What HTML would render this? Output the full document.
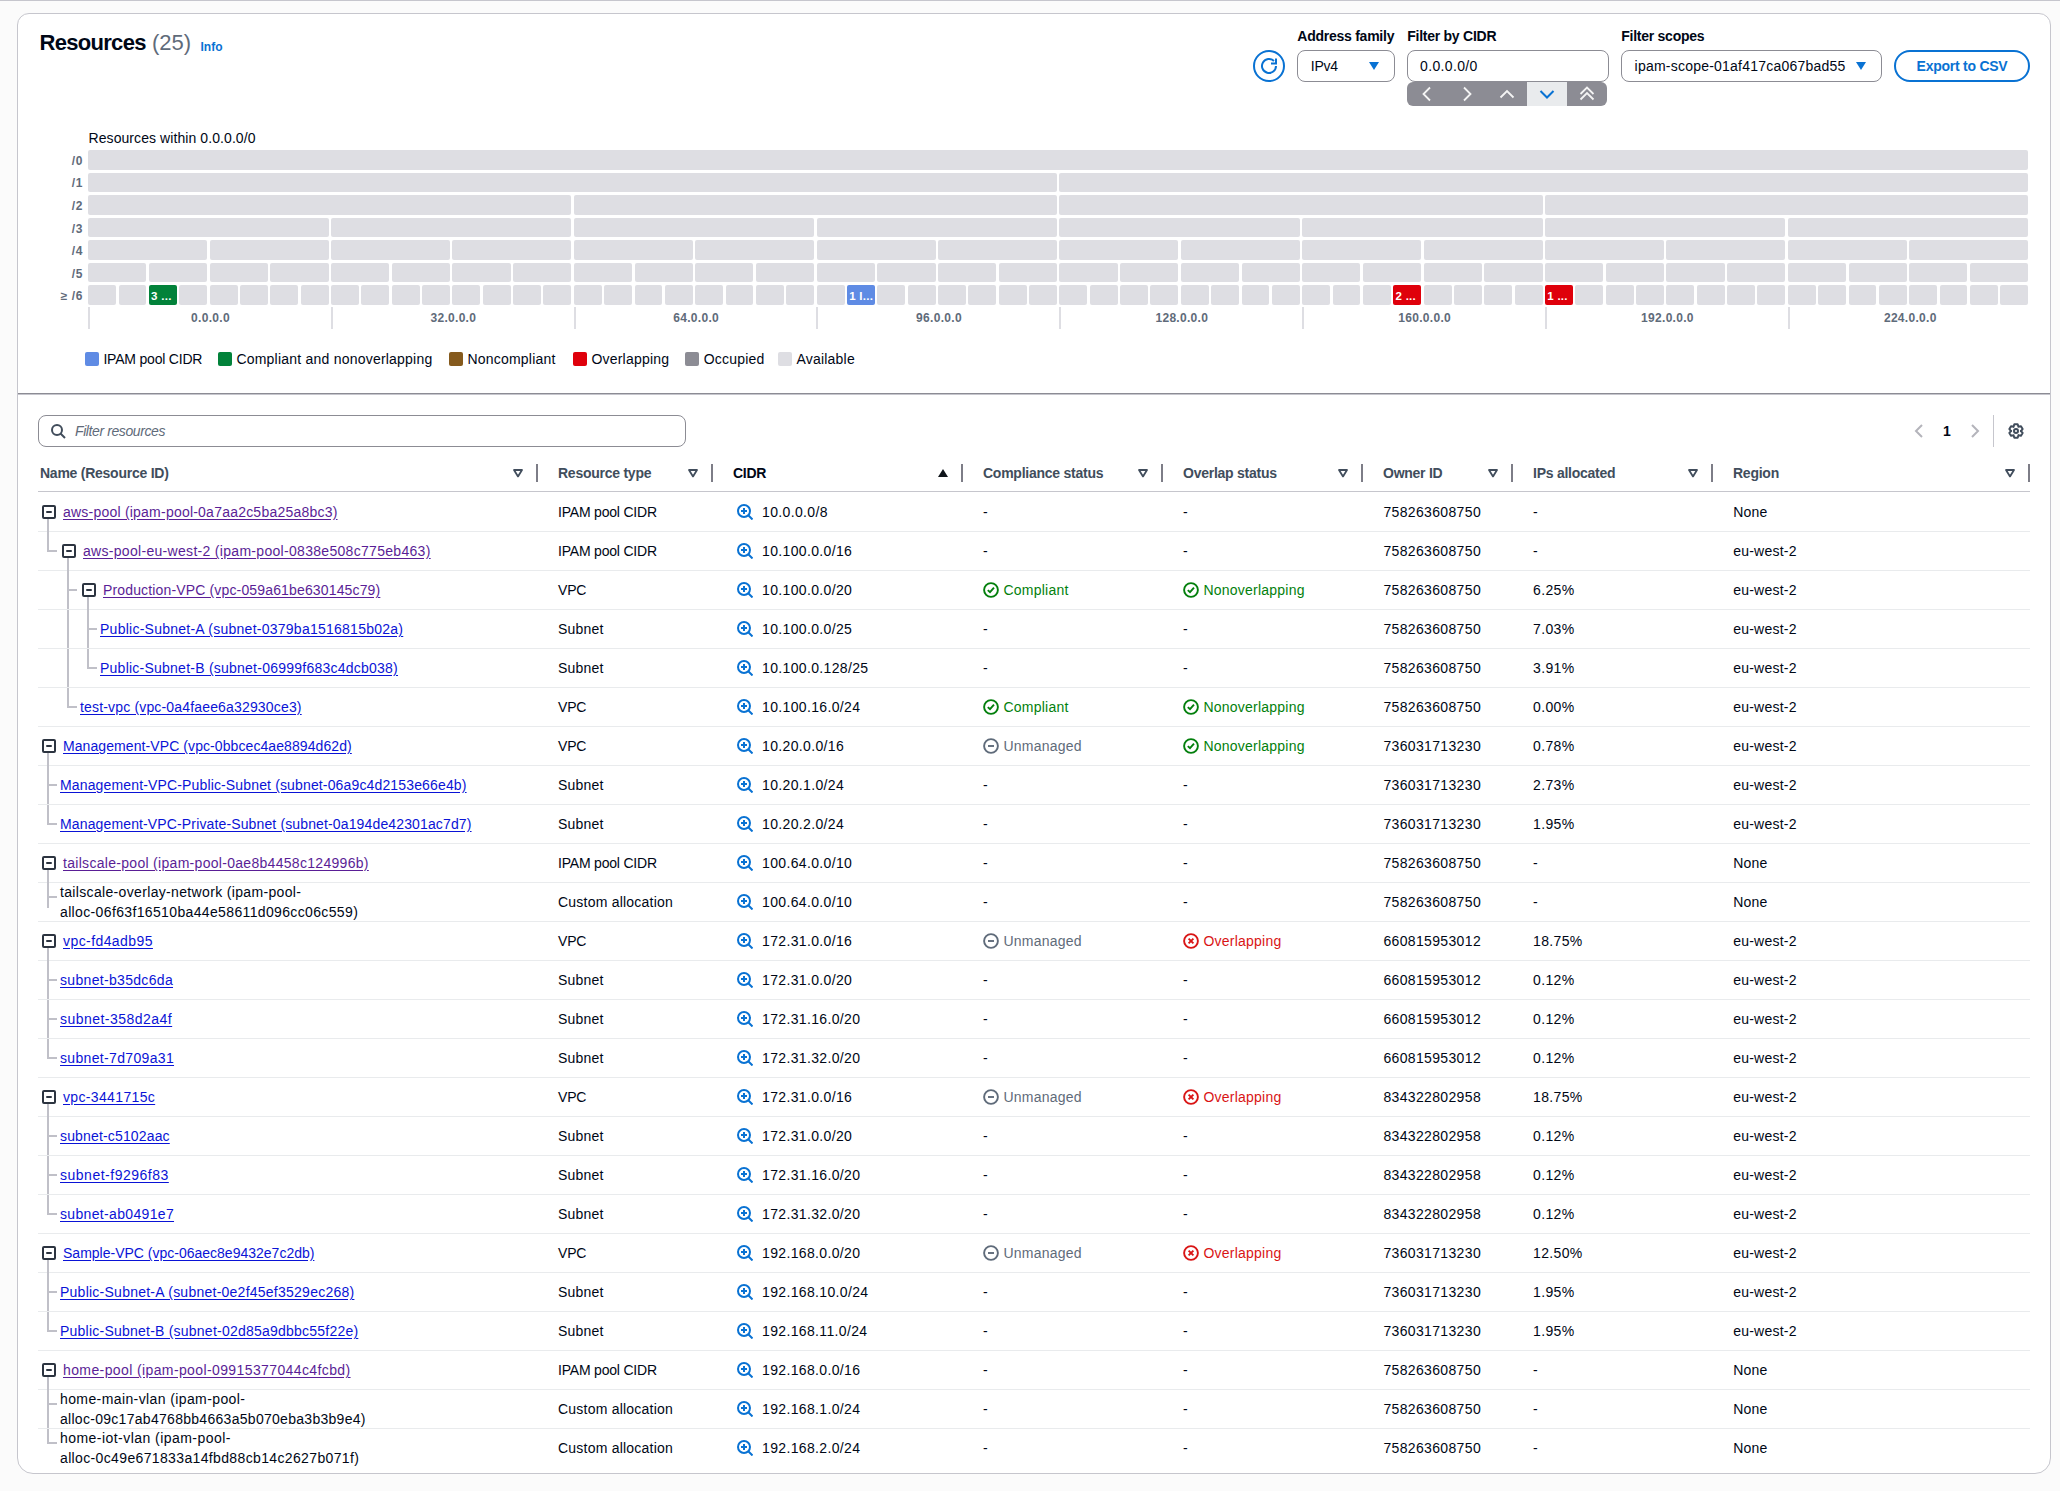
<!DOCTYPE html>
<html><head><meta charset="utf-8"><title>Resources</title>
<style>
html,body{margin:0;padding:0;}
body{width:2060px;height:1491px;overflow:hidden;position:relative;background:#fbfbfb;font-family:"Liberation Sans", sans-serif;}
.a{position:absolute;}
.t{position:absolute;white-space:nowrap;}
.cell{border-radius:2px;color:#fff;font-weight:700;font-size:11.5px;letter-spacing:0.3px;line-height:19.6px;overflow:hidden;white-space:nowrap;}
.cell span{position:absolute;left:2.2px;top:2px;}
</style></head><body>
<div class="a" style="left:0.00px;top:0.00px;width:2060.00px;height:1.00px;background:#c6c6cd"></div>
<div class="a" style="left:17.00px;top:13.00px;width:2034.00px;height:1461.00px;border:1px solid #c6c6cd;border-radius:12px 12px 16px 16px;background:#fff;box-sizing:border-box"></div>
<div class="t" style="left:39.50px;top:32.28px;font-size:22px;line-height:22px;font-weight:700;color:#000716;letter-spacing:-0.7px">Resources</div>
<div class="t" style="left:152.00px;top:32.28px;font-size:22px;line-height:22px;font-weight:400;color:#5f6b7a;">(25)</div>
<div class="t" style="left:200.50px;top:40.74px;font-size:12px;line-height:12px;font-weight:700;color:#0972d3;">Info</div>
<svg class="a" style="left:1252.00px;top:49.00px" width="34" height="34" viewBox="0 0 34 34" fill="none"><circle cx="17" cy="17" r="15" stroke="#0972d3" stroke-width="2"/><path d="M24 17a7 7 0 1 1-2.05-4.95" stroke="#0972d3" stroke-width="2"/><path d="M19 14.5h5v-5" stroke="#0972d3" stroke-width="2"/></svg>
<div class="t" style="left:1297.30px;top:29.05px;font-size:14px;line-height:14px;font-weight:700;color:#000716;;letter-spacing:-0.25px">Address family</div>
<div class="t" style="left:1407.20px;top:29.05px;font-size:14px;line-height:14px;font-weight:700;color:#000716;;letter-spacing:-0.25px">Filter by CIDR</div>
<div class="t" style="left:1621.20px;top:29.05px;font-size:14px;line-height:14px;font-weight:700;color:#000716;;letter-spacing:-0.25px">Filter scopes</div>
<div class="a" style="left:1297.00px;top:50.00px;width:98.00px;height:32.00px;border:1px solid #8c8c94;border-radius:8px;box-sizing:border-box;background:#fff"></div>
<div class="t" style="left:1310.70px;top:58.95px;font-size:14px;line-height:14px;font-weight:400;color:#000716;;letter-spacing:-0.2px">IPv4</div>
<svg class="a" style="left:1366.00px;top:58.00px" width="16" height="16" viewBox="0 0 16 16" fill="none"><path d="M3 4h10l-5 8z" fill="#0972d3"/></svg>
<div class="a" style="left:1407.00px;top:82.00px;width:200.00px;height:24.00px;background:#8c8c94;border-radius:6px"></div>
<div class="a" style="left:1527.00px;top:82.00px;width:40.00px;height:24.00px;background:#e9ebed"></div>
<div class="a" style="left:1407.00px;top:50.00px;width:202.00px;height:32.00px;border:1px solid #8c8c94;border-radius:8px;box-sizing:border-box;background:#fff"></div>
<div class="t" style="left:1420.10px;top:58.95px;font-size:14px;line-height:14px;font-weight:400;color:#000716;;letter-spacing:0.35px">0.0.0.0/0</div>
<svg class="a" style="left:1419.00px;top:86.00px" width="16" height="16" viewBox="0 0 16 16" fill="none"><path d="M11 1.5 4.5 8l6.5 6.5" stroke="#f4f4f4" stroke-width="1.8"/></svg>
<svg class="a" style="left:1459.00px;top:86.00px" width="16" height="16" viewBox="0 0 16 16" fill="none"><path d="M5 1.5 11.5 8 5 14.5" stroke="#f4f4f4" stroke-width="1.8"/></svg>
<svg class="a" style="left:1499.00px;top:86.00px" width="16" height="16" viewBox="0 0 16 16" fill="none"><path d="M1.5 11.5 8 5l6.5 6.5" stroke="#f4f4f4" stroke-width="1.8"/></svg>
<svg class="a" style="left:1539.00px;top:86.00px" width="16" height="16" viewBox="0 0 16 16" fill="none"><path d="M1.5 5 8 11.5 14.5 5" stroke="#0972d3" stroke-width="2"/></svg>
<svg class="a" style="left:1579.00px;top:86.00px" width="16" height="16" viewBox="0 0 16 16" fill="none"><path d="M1.5 8 8 1.5 14.5 8M1.5 13.5 8 7l6.5 6.5" stroke="#f4f4f4" stroke-width="1.8"/></svg>
<div class="a" style="left:1621.00px;top:50.00px;width:261.00px;height:32.00px;border:1px solid #8c8c94;border-radius:8px;box-sizing:border-box;background:#fff"></div>
<div class="t" style="left:1634.60px;top:58.95px;font-size:14px;line-height:14px;font-weight:400;color:#000716;;letter-spacing:0.22px">ipam-scope-01af417ca067bad55</div>
<svg class="a" style="left:1853.00px;top:58.00px" width="16" height="16" viewBox="0 0 16 16" fill="none"><path d="M3 4h10l-5 8z" fill="#0972d3"/></svg>
<div class="a" style="left:1894.00px;top:50.00px;width:136.00px;height:32.00px;border:2px solid #0972d3;border-radius:20px;box-sizing:border-box;background:#fff"></div>
<div class="t" style="left:1462.00px;width:1000px;text-align:center;top:58.95px;font-size:14px;line-height:14px;font-weight:700;color:#0972d3;;letter-spacing:-0.25px">Export to CSV</div>
<div class="t" style="left:88.50px;top:130.85px;font-size:14px;line-height:14px;font-weight:400;color:#000716;letter-spacing:0.08px">Resources within 0.0.0.0/0</div>
<div class="t" style="left:-917.00px;width:1000px;text-align:right;top:154.94px;font-size:12px;line-height:12px;font-weight:700;color:#5f6b7a;letter-spacing:0.6px">/0</div>
<div class="a" style="left:88.20px;top:150.10px;width:1940.00px;height:19.60px;background:#dedee3;border-radius:2px"></div>
<div class="t" style="left:-917.00px;width:1000px;text-align:right;top:177.46px;font-size:12px;line-height:12px;font-weight:700;color:#5f6b7a;letter-spacing:0.6px">/1</div>
<div class="a" style="left:88.20px;top:172.62px;width:968.80px;height:19.60px;background:#dedee3;border-radius:2px"></div>
<div class="a" style="left:1059.40px;top:172.62px;width:968.80px;height:19.60px;background:#dedee3;border-radius:2px"></div>
<div class="t" style="left:-917.00px;width:1000px;text-align:right;top:199.98px;font-size:12px;line-height:12px;font-weight:700;color:#5f6b7a;letter-spacing:0.6px">/2</div>
<div class="a" style="left:88.20px;top:195.14px;width:483.20px;height:19.60px;background:#dedee3;border-radius:2px"></div>
<div class="a" style="left:573.80px;top:195.14px;width:483.20px;height:19.60px;background:#dedee3;border-radius:2px"></div>
<div class="a" style="left:1059.40px;top:195.14px;width:483.20px;height:19.60px;background:#dedee3;border-radius:2px"></div>
<div class="a" style="left:1545.00px;top:195.14px;width:483.20px;height:19.60px;background:#dedee3;border-radius:2px"></div>
<div class="t" style="left:-917.00px;width:1000px;text-align:right;top:222.50px;font-size:12px;line-height:12px;font-weight:700;color:#5f6b7a;letter-spacing:0.6px">/3</div>
<div class="a" style="left:88.20px;top:217.66px;width:240.40px;height:19.60px;background:#dedee3;border-radius:2px"></div>
<div class="a" style="left:331.00px;top:217.66px;width:240.40px;height:19.60px;background:#dedee3;border-radius:2px"></div>
<div class="a" style="left:573.80px;top:217.66px;width:240.40px;height:19.60px;background:#dedee3;border-radius:2px"></div>
<div class="a" style="left:816.60px;top:217.66px;width:240.40px;height:19.60px;background:#dedee3;border-radius:2px"></div>
<div class="a" style="left:1059.40px;top:217.66px;width:240.40px;height:19.60px;background:#dedee3;border-radius:2px"></div>
<div class="a" style="left:1302.20px;top:217.66px;width:240.40px;height:19.60px;background:#dedee3;border-radius:2px"></div>
<div class="a" style="left:1545.00px;top:217.66px;width:240.40px;height:19.60px;background:#dedee3;border-radius:2px"></div>
<div class="a" style="left:1787.80px;top:217.66px;width:240.40px;height:19.60px;background:#dedee3;border-radius:2px"></div>
<div class="t" style="left:-917.00px;width:1000px;text-align:right;top:245.02px;font-size:12px;line-height:12px;font-weight:700;color:#5f6b7a;letter-spacing:0.6px">/4</div>
<div class="a" style="left:88.20px;top:240.18px;width:119.00px;height:19.60px;background:#dedee3;border-radius:2px"></div>
<div class="a" style="left:209.60px;top:240.18px;width:119.00px;height:19.60px;background:#dedee3;border-radius:2px"></div>
<div class="a" style="left:331.00px;top:240.18px;width:119.00px;height:19.60px;background:#dedee3;border-radius:2px"></div>
<div class="a" style="left:452.40px;top:240.18px;width:119.00px;height:19.60px;background:#dedee3;border-radius:2px"></div>
<div class="a" style="left:573.80px;top:240.18px;width:119.00px;height:19.60px;background:#dedee3;border-radius:2px"></div>
<div class="a" style="left:695.20px;top:240.18px;width:119.00px;height:19.60px;background:#dedee3;border-radius:2px"></div>
<div class="a" style="left:816.60px;top:240.18px;width:119.00px;height:19.60px;background:#dedee3;border-radius:2px"></div>
<div class="a" style="left:938.00px;top:240.18px;width:119.00px;height:19.60px;background:#dedee3;border-radius:2px"></div>
<div class="a" style="left:1059.40px;top:240.18px;width:119.00px;height:19.60px;background:#dedee3;border-radius:2px"></div>
<div class="a" style="left:1180.80px;top:240.18px;width:119.00px;height:19.60px;background:#dedee3;border-radius:2px"></div>
<div class="a" style="left:1302.20px;top:240.18px;width:119.00px;height:19.60px;background:#dedee3;border-radius:2px"></div>
<div class="a" style="left:1423.60px;top:240.18px;width:119.00px;height:19.60px;background:#dedee3;border-radius:2px"></div>
<div class="a" style="left:1545.00px;top:240.18px;width:119.00px;height:19.60px;background:#dedee3;border-radius:2px"></div>
<div class="a" style="left:1666.40px;top:240.18px;width:119.00px;height:19.60px;background:#dedee3;border-radius:2px"></div>
<div class="a" style="left:1787.80px;top:240.18px;width:119.00px;height:19.60px;background:#dedee3;border-radius:2px"></div>
<div class="a" style="left:1909.20px;top:240.18px;width:119.00px;height:19.60px;background:#dedee3;border-radius:2px"></div>
<div class="t" style="left:-917.00px;width:1000px;text-align:right;top:267.54px;font-size:12px;line-height:12px;font-weight:700;color:#5f6b7a;letter-spacing:0.6px">/5</div>
<div class="a" style="left:88.20px;top:262.70px;width:58.30px;height:19.60px;background:#dedee3;border-radius:2px"></div>
<div class="a" style="left:148.90px;top:262.70px;width:58.30px;height:19.60px;background:#dedee3;border-radius:2px"></div>
<div class="a" style="left:209.60px;top:262.70px;width:58.30px;height:19.60px;background:#dedee3;border-radius:2px"></div>
<div class="a" style="left:270.30px;top:262.70px;width:58.30px;height:19.60px;background:#dedee3;border-radius:2px"></div>
<div class="a" style="left:331.00px;top:262.70px;width:58.30px;height:19.60px;background:#dedee3;border-radius:2px"></div>
<div class="a" style="left:391.70px;top:262.70px;width:58.30px;height:19.60px;background:#dedee3;border-radius:2px"></div>
<div class="a" style="left:452.40px;top:262.70px;width:58.30px;height:19.60px;background:#dedee3;border-radius:2px"></div>
<div class="a" style="left:513.10px;top:262.70px;width:58.30px;height:19.60px;background:#dedee3;border-radius:2px"></div>
<div class="a" style="left:573.80px;top:262.70px;width:58.30px;height:19.60px;background:#dedee3;border-radius:2px"></div>
<div class="a" style="left:634.50px;top:262.70px;width:58.30px;height:19.60px;background:#dedee3;border-radius:2px"></div>
<div class="a" style="left:695.20px;top:262.70px;width:58.30px;height:19.60px;background:#dedee3;border-radius:2px"></div>
<div class="a" style="left:755.90px;top:262.70px;width:58.30px;height:19.60px;background:#dedee3;border-radius:2px"></div>
<div class="a" style="left:816.60px;top:262.70px;width:58.30px;height:19.60px;background:#dedee3;border-radius:2px"></div>
<div class="a" style="left:877.30px;top:262.70px;width:58.30px;height:19.60px;background:#dedee3;border-radius:2px"></div>
<div class="a" style="left:938.00px;top:262.70px;width:58.30px;height:19.60px;background:#dedee3;border-radius:2px"></div>
<div class="a" style="left:998.70px;top:262.70px;width:58.30px;height:19.60px;background:#dedee3;border-radius:2px"></div>
<div class="a" style="left:1059.40px;top:262.70px;width:58.30px;height:19.60px;background:#dedee3;border-radius:2px"></div>
<div class="a" style="left:1120.10px;top:262.70px;width:58.30px;height:19.60px;background:#dedee3;border-radius:2px"></div>
<div class="a" style="left:1180.80px;top:262.70px;width:58.30px;height:19.60px;background:#dedee3;border-radius:2px"></div>
<div class="a" style="left:1241.50px;top:262.70px;width:58.30px;height:19.60px;background:#dedee3;border-radius:2px"></div>
<div class="a" style="left:1302.20px;top:262.70px;width:58.30px;height:19.60px;background:#dedee3;border-radius:2px"></div>
<div class="a" style="left:1362.90px;top:262.70px;width:58.30px;height:19.60px;background:#dedee3;border-radius:2px"></div>
<div class="a" style="left:1423.60px;top:262.70px;width:58.30px;height:19.60px;background:#dedee3;border-radius:2px"></div>
<div class="a" style="left:1484.30px;top:262.70px;width:58.30px;height:19.60px;background:#dedee3;border-radius:2px"></div>
<div class="a" style="left:1545.00px;top:262.70px;width:58.30px;height:19.60px;background:#dedee3;border-radius:2px"></div>
<div class="a" style="left:1605.70px;top:262.70px;width:58.30px;height:19.60px;background:#dedee3;border-radius:2px"></div>
<div class="a" style="left:1666.40px;top:262.70px;width:58.30px;height:19.60px;background:#dedee3;border-radius:2px"></div>
<div class="a" style="left:1727.10px;top:262.70px;width:58.30px;height:19.60px;background:#dedee3;border-radius:2px"></div>
<div class="a" style="left:1787.80px;top:262.70px;width:58.30px;height:19.60px;background:#dedee3;border-radius:2px"></div>
<div class="a" style="left:1848.50px;top:262.70px;width:58.30px;height:19.60px;background:#dedee3;border-radius:2px"></div>
<div class="a" style="left:1909.20px;top:262.70px;width:58.30px;height:19.60px;background:#dedee3;border-radius:2px"></div>
<div class="a" style="left:1969.90px;top:262.70px;width:58.30px;height:19.60px;background:#dedee3;border-radius:2px"></div>
<div class="t" style="left:-917.00px;width:1000px;text-align:right;top:290.06px;font-size:12px;line-height:12px;font-weight:700;color:#5f6b7a;letter-spacing:0.6px">&ge; /6</div>
<div class="a" style="left:88.20px;top:285.22px;width:27.95px;height:19.60px;background:#dedee3;border-radius:2px"></div>
<div class="a" style="left:118.55px;top:285.22px;width:27.95px;height:19.60px;background:#dedee3;border-radius:2px"></div>
<div class="a cell" style="left:148.90px;top:285.22px;width:27.95px;height:19.6px;background:#02823a"><span>3 ...</span></div>
<div class="a" style="left:179.25px;top:285.22px;width:27.95px;height:19.60px;background:#dedee3;border-radius:2px"></div>
<div class="a" style="left:209.60px;top:285.22px;width:27.95px;height:19.60px;background:#dedee3;border-radius:2px"></div>
<div class="a" style="left:239.95px;top:285.22px;width:27.95px;height:19.60px;background:#dedee3;border-radius:2px"></div>
<div class="a" style="left:270.30px;top:285.22px;width:27.95px;height:19.60px;background:#dedee3;border-radius:2px"></div>
<div class="a" style="left:300.65px;top:285.22px;width:27.95px;height:19.60px;background:#dedee3;border-radius:2px"></div>
<div class="a" style="left:331.00px;top:285.22px;width:27.95px;height:19.60px;background:#dedee3;border-radius:2px"></div>
<div class="a" style="left:361.35px;top:285.22px;width:27.95px;height:19.60px;background:#dedee3;border-radius:2px"></div>
<div class="a" style="left:391.70px;top:285.22px;width:27.95px;height:19.60px;background:#dedee3;border-radius:2px"></div>
<div class="a" style="left:422.05px;top:285.22px;width:27.95px;height:19.60px;background:#dedee3;border-radius:2px"></div>
<div class="a" style="left:452.40px;top:285.22px;width:27.95px;height:19.60px;background:#dedee3;border-radius:2px"></div>
<div class="a" style="left:482.75px;top:285.22px;width:27.95px;height:19.60px;background:#dedee3;border-radius:2px"></div>
<div class="a" style="left:513.10px;top:285.22px;width:27.95px;height:19.60px;background:#dedee3;border-radius:2px"></div>
<div class="a" style="left:543.45px;top:285.22px;width:27.95px;height:19.60px;background:#dedee3;border-radius:2px"></div>
<div class="a" style="left:573.80px;top:285.22px;width:27.95px;height:19.60px;background:#dedee3;border-radius:2px"></div>
<div class="a" style="left:604.15px;top:285.22px;width:27.95px;height:19.60px;background:#dedee3;border-radius:2px"></div>
<div class="a" style="left:634.50px;top:285.22px;width:27.95px;height:19.60px;background:#dedee3;border-radius:2px"></div>
<div class="a" style="left:664.85px;top:285.22px;width:27.95px;height:19.60px;background:#dedee3;border-radius:2px"></div>
<div class="a" style="left:695.20px;top:285.22px;width:27.95px;height:19.60px;background:#dedee3;border-radius:2px"></div>
<div class="a" style="left:725.55px;top:285.22px;width:27.95px;height:19.60px;background:#dedee3;border-radius:2px"></div>
<div class="a" style="left:755.90px;top:285.22px;width:27.95px;height:19.60px;background:#dedee3;border-radius:2px"></div>
<div class="a" style="left:786.25px;top:285.22px;width:27.95px;height:19.60px;background:#dedee3;border-radius:2px"></div>
<div class="a" style="left:816.60px;top:285.22px;width:27.95px;height:19.60px;background:#dedee3;border-radius:2px"></div>
<div class="a cell" style="left:846.95px;top:285.22px;width:27.95px;height:19.6px;background:#5f8be4"><span>1 I...</span></div>
<div class="a" style="left:877.30px;top:285.22px;width:27.95px;height:19.60px;background:#dedee3;border-radius:2px"></div>
<div class="a" style="left:907.65px;top:285.22px;width:27.95px;height:19.60px;background:#dedee3;border-radius:2px"></div>
<div class="a" style="left:938.00px;top:285.22px;width:27.95px;height:19.60px;background:#dedee3;border-radius:2px"></div>
<div class="a" style="left:968.35px;top:285.22px;width:27.95px;height:19.60px;background:#dedee3;border-radius:2px"></div>
<div class="a" style="left:998.70px;top:285.22px;width:27.95px;height:19.60px;background:#dedee3;border-radius:2px"></div>
<div class="a" style="left:1029.05px;top:285.22px;width:27.95px;height:19.60px;background:#dedee3;border-radius:2px"></div>
<div class="a" style="left:1059.40px;top:285.22px;width:27.95px;height:19.60px;background:#dedee3;border-radius:2px"></div>
<div class="a" style="left:1089.75px;top:285.22px;width:27.95px;height:19.60px;background:#dedee3;border-radius:2px"></div>
<div class="a" style="left:1120.10px;top:285.22px;width:27.95px;height:19.60px;background:#dedee3;border-radius:2px"></div>
<div class="a" style="left:1150.45px;top:285.22px;width:27.95px;height:19.60px;background:#dedee3;border-radius:2px"></div>
<div class="a" style="left:1180.80px;top:285.22px;width:27.95px;height:19.60px;background:#dedee3;border-radius:2px"></div>
<div class="a" style="left:1211.15px;top:285.22px;width:27.95px;height:19.60px;background:#dedee3;border-radius:2px"></div>
<div class="a" style="left:1241.50px;top:285.22px;width:27.95px;height:19.60px;background:#dedee3;border-radius:2px"></div>
<div class="a" style="left:1271.85px;top:285.22px;width:27.95px;height:19.60px;background:#dedee3;border-radius:2px"></div>
<div class="a" style="left:1302.20px;top:285.22px;width:27.95px;height:19.60px;background:#dedee3;border-radius:2px"></div>
<div class="a" style="left:1332.55px;top:285.22px;width:27.95px;height:19.60px;background:#dedee3;border-radius:2px"></div>
<div class="a" style="left:1362.90px;top:285.22px;width:27.95px;height:19.60px;background:#dedee3;border-radius:2px"></div>
<div class="a cell" style="left:1393.25px;top:285.22px;width:27.95px;height:19.6px;background:#df000b"><span>2 ...</span></div>
<div class="a" style="left:1423.60px;top:285.22px;width:27.95px;height:19.60px;background:#dedee3;border-radius:2px"></div>
<div class="a" style="left:1453.95px;top:285.22px;width:27.95px;height:19.60px;background:#dedee3;border-radius:2px"></div>
<div class="a" style="left:1484.30px;top:285.22px;width:27.95px;height:19.60px;background:#dedee3;border-radius:2px"></div>
<div class="a" style="left:1514.65px;top:285.22px;width:27.95px;height:19.60px;background:#dedee3;border-radius:2px"></div>
<div class="a cell" style="left:1545.00px;top:285.22px;width:27.95px;height:19.6px;background:#df000b"><span>1 ...</span></div>
<div class="a" style="left:1575.35px;top:285.22px;width:27.95px;height:19.60px;background:#dedee3;border-radius:2px"></div>
<div class="a" style="left:1605.70px;top:285.22px;width:27.95px;height:19.60px;background:#dedee3;border-radius:2px"></div>
<div class="a" style="left:1636.05px;top:285.22px;width:27.95px;height:19.60px;background:#dedee3;border-radius:2px"></div>
<div class="a" style="left:1666.40px;top:285.22px;width:27.95px;height:19.60px;background:#dedee3;border-radius:2px"></div>
<div class="a" style="left:1696.75px;top:285.22px;width:27.95px;height:19.60px;background:#dedee3;border-radius:2px"></div>
<div class="a" style="left:1727.10px;top:285.22px;width:27.95px;height:19.60px;background:#dedee3;border-radius:2px"></div>
<div class="a" style="left:1757.45px;top:285.22px;width:27.95px;height:19.60px;background:#dedee3;border-radius:2px"></div>
<div class="a" style="left:1787.80px;top:285.22px;width:27.95px;height:19.60px;background:#dedee3;border-radius:2px"></div>
<div class="a" style="left:1818.15px;top:285.22px;width:27.95px;height:19.60px;background:#dedee3;border-radius:2px"></div>
<div class="a" style="left:1848.50px;top:285.22px;width:27.95px;height:19.60px;background:#dedee3;border-radius:2px"></div>
<div class="a" style="left:1878.85px;top:285.22px;width:27.95px;height:19.60px;background:#dedee3;border-radius:2px"></div>
<div class="a" style="left:1909.20px;top:285.22px;width:27.95px;height:19.60px;background:#dedee3;border-radius:2px"></div>
<div class="a" style="left:1939.55px;top:285.22px;width:27.95px;height:19.60px;background:#dedee3;border-radius:2px"></div>
<div class="a" style="left:1969.90px;top:285.22px;width:27.95px;height:19.60px;background:#dedee3;border-radius:2px"></div>
<div class="a" style="left:2000.25px;top:285.22px;width:27.95px;height:19.60px;background:#dedee3;border-radius:2px"></div>
<div class="a" style="left:88.00px;top:307.00px;width:2.00px;height:22.00px;background:#dedee3"></div>
<div class="t" style="left:-289.50px;width:1000px;text-align:center;top:311.84px;font-size:12px;line-height:12px;font-weight:700;color:#5f6b7a;letter-spacing:0.3px">0.0.0.0</div>
<div class="a" style="left:330.83px;top:307.00px;width:2.00px;height:22.00px;background:#dedee3"></div>
<div class="t" style="left:-46.67px;width:1000px;text-align:center;top:311.84px;font-size:12px;line-height:12px;font-weight:700;color:#5f6b7a;letter-spacing:0.3px">32.0.0.0</div>
<div class="a" style="left:573.66px;top:307.00px;width:2.00px;height:22.00px;background:#dedee3"></div>
<div class="t" style="left:196.16px;width:1000px;text-align:center;top:311.84px;font-size:12px;line-height:12px;font-weight:700;color:#5f6b7a;letter-spacing:0.3px">64.0.0.0</div>
<div class="a" style="left:816.49px;top:307.00px;width:2.00px;height:22.00px;background:#dedee3"></div>
<div class="t" style="left:438.99px;width:1000px;text-align:center;top:311.84px;font-size:12px;line-height:12px;font-weight:700;color:#5f6b7a;letter-spacing:0.3px">96.0.0.0</div>
<div class="a" style="left:1059.32px;top:307.00px;width:2.00px;height:22.00px;background:#dedee3"></div>
<div class="t" style="left:681.82px;width:1000px;text-align:center;top:311.84px;font-size:12px;line-height:12px;font-weight:700;color:#5f6b7a;letter-spacing:0.3px">128.0.0.0</div>
<div class="a" style="left:1302.15px;top:307.00px;width:2.00px;height:22.00px;background:#dedee3"></div>
<div class="t" style="left:924.65px;width:1000px;text-align:center;top:311.84px;font-size:12px;line-height:12px;font-weight:700;color:#5f6b7a;letter-spacing:0.3px">160.0.0.0</div>
<div class="a" style="left:1544.98px;top:307.00px;width:2.00px;height:22.00px;background:#dedee3"></div>
<div class="t" style="left:1167.48px;width:1000px;text-align:center;top:311.84px;font-size:12px;line-height:12px;font-weight:700;color:#5f6b7a;letter-spacing:0.3px">192.0.0.0</div>
<div class="a" style="left:1787.81px;top:307.00px;width:2.00px;height:22.00px;background:#dedee3"></div>
<div class="t" style="left:1410.31px;width:1000px;text-align:center;top:311.84px;font-size:12px;line-height:12px;font-weight:700;color:#5f6b7a;letter-spacing:0.3px">224.0.0.0</div>
<div class="a" style="left:85.00px;top:352.00px;width:14.00px;height:14.00px;background:#5f8be4;border-radius:2px"></div>
<div class="t" style="left:103.40px;top:352.05px;font-size:14px;line-height:14px;font-weight:400;color:#000716;;letter-spacing:-0.2px">IPAM pool CIDR</div>
<div class="a" style="left:218.00px;top:352.00px;width:14.00px;height:14.00px;background:#02823a;border-radius:2px"></div>
<div class="t" style="left:236.40px;top:352.05px;font-size:14px;line-height:14px;font-weight:400;color:#000716;;letter-spacing:0.22px">Compliant and nonoverlapping</div>
<div class="a" style="left:449.00px;top:352.00px;width:14.00px;height:14.00px;background:#855a1d;border-radius:2px"></div>
<div class="t" style="left:467.40px;top:352.05px;font-size:14px;line-height:14px;font-weight:400;color:#000716;;letter-spacing:0.22px">Noncompliant</div>
<div class="a" style="left:573.00px;top:352.00px;width:14.00px;height:14.00px;background:#df000b;border-radius:2px"></div>
<div class="t" style="left:591.40px;top:352.05px;font-size:14px;line-height:14px;font-weight:400;color:#000716;;letter-spacing:0.22px">Overlapping</div>
<div class="a" style="left:685.30px;top:352.00px;width:14.00px;height:14.00px;background:#8c8c94;border-radius:2px"></div>
<div class="t" style="left:703.70px;top:352.05px;font-size:14px;line-height:14px;font-weight:400;color:#000716;;letter-spacing:0.22px">Occupied</div>
<div class="a" style="left:778.00px;top:352.00px;width:14.00px;height:14.00px;background:#dedee3;border-radius:2px"></div>
<div class="t" style="left:796.40px;top:352.05px;font-size:14px;line-height:14px;font-weight:400;color:#000716;;letter-spacing:0.22px">Available</div>
<div class="a" style="left:18.00px;top:393.00px;width:2032.00px;height:1.00px;background:#8c8c94"></div>
<div class="a" style="left:18.00px;top:394.00px;width:2032.00px;height:1.00px;background:#c6c6cd"></div>
<div class="a" style="left:38.00px;top:415.00px;width:648.00px;height:32.00px;border:1px solid #8c8c94;border-radius:8px;box-sizing:border-box;background:#fff"></div>
<svg class="a" style="left:50.00px;top:423.00px" width="16" height="16" viewBox="0 0 16 16" fill="none"><circle cx="7" cy="7" r="5" stroke="#414d5c" stroke-width="2"/><path d="M10.5 10.5 15 15" stroke="#414d5c" stroke-width="2"/></svg>
<div class="t" style="left:75.00px;top:424.15px;font-size:14px;line-height:14px;font-weight:400;color:#5f6b7a;font-style:italic;letter-spacing:-0.4px">Filter resources</div>
<svg class="a" style="left:1911.00px;top:423.00px" width="16" height="16" viewBox="0 0 16 16" fill="none"><path d="M11 2 5 8l6 6" stroke="#b4b4bb" stroke-width="2"/></svg>
<div class="t" style="left:1446.80px;width:1000px;text-align:center;top:424.15px;font-size:14px;line-height:14px;font-weight:700;color:#000716;;letter-spacing:-0.25px">1</div>
<svg class="a" style="left:1967.00px;top:423.00px" width="16" height="16" viewBox="0 0 16 16" fill="none"><path d="M5 2l6 6-6 6" stroke="#b4b4bb" stroke-width="2"/></svg>
<div class="a" style="left:1993.00px;top:415.00px;width:1.00px;height:32.00px;background:#c6c6cd"></div>
<svg class="a" style="left:2007.00px;top:421.75px" width="18" height="18" viewBox="0 0 18 18" fill="none"><path d="M6.40 4.84 L7.33 2.30 L10.67 2.30 L11.60 4.84 L11.30 4.67 L13.96 4.21 L15.63 7.10 L13.90 9.17 L13.90 8.83 L15.63 10.90 L13.96 13.79 L11.30 13.33 L11.60 13.16 L10.67 15.70 L7.33 15.70 L6.40 13.16 L6.70 13.33 L4.04 13.79 L2.37 10.90 L4.10 8.83 L4.10 9.17 L2.37 7.10 L4.04 4.21 L6.70 4.67Z" stroke="#414d5c" stroke-width="2" stroke-linejoin="round"/><circle cx="9" cy="9" r="2" stroke="#414d5c" stroke-width="2"/></svg>
<div class="t" style="left:40.00px;top:466.15px;font-size:14px;line-height:14px;font-weight:700;color:#414d5c;;letter-spacing:-0.25px">Name (Resource ID)</div>
<svg class="a" style="left:512.00px;top:467.00px" width="12" height="12" viewBox="0 0 12 12" fill="none"><path d="M2 3h8L6 9.4z" stroke="#414d5c" stroke-width="1.8" stroke-linejoin="round"/></svg>
<div class="a" style="left:536.00px;top:464.00px;width:2.00px;height:18.00px;background:#7d7d87"></div>
<div class="t" style="left:558.00px;top:466.15px;font-size:14px;line-height:14px;font-weight:700;color:#414d5c;;letter-spacing:-0.25px">Resource type</div>
<svg class="a" style="left:687.00px;top:467.00px" width="12" height="12" viewBox="0 0 12 12" fill="none"><path d="M2 3h8L6 9.4z" stroke="#414d5c" stroke-width="1.8" stroke-linejoin="round"/></svg>
<div class="a" style="left:711.00px;top:464.00px;width:2.00px;height:18.00px;background:#7d7d87"></div>
<div class="t" style="left:733.00px;top:466.15px;font-size:14px;line-height:14px;font-weight:700;color:#000716;;letter-spacing:-0.25px">CIDR</div>
<svg class="a" style="left:937.00px;top:467.00px" width="12" height="12" viewBox="0 0 12 12" fill="none"><path d="M1 10h10L6 2z" fill="#0f141a"/></svg>
<div class="a" style="left:961.00px;top:464.00px;width:2.00px;height:18.00px;background:#7d7d87"></div>
<div class="t" style="left:983.00px;top:466.15px;font-size:14px;line-height:14px;font-weight:700;color:#414d5c;;letter-spacing:-0.25px">Compliance status</div>
<svg class="a" style="left:1137.00px;top:467.00px" width="12" height="12" viewBox="0 0 12 12" fill="none"><path d="M2 3h8L6 9.4z" stroke="#414d5c" stroke-width="1.8" stroke-linejoin="round"/></svg>
<div class="a" style="left:1161.00px;top:464.00px;width:2.00px;height:18.00px;background:#7d7d87"></div>
<div class="t" style="left:1183.00px;top:466.15px;font-size:14px;line-height:14px;font-weight:700;color:#414d5c;;letter-spacing:-0.25px">Overlap status</div>
<svg class="a" style="left:1337.00px;top:467.00px" width="12" height="12" viewBox="0 0 12 12" fill="none"><path d="M2 3h8L6 9.4z" stroke="#414d5c" stroke-width="1.8" stroke-linejoin="round"/></svg>
<div class="a" style="left:1361.00px;top:464.00px;width:2.00px;height:18.00px;background:#7d7d87"></div>
<div class="t" style="left:1383.00px;top:466.15px;font-size:14px;line-height:14px;font-weight:700;color:#414d5c;;letter-spacing:-0.25px">Owner ID</div>
<svg class="a" style="left:1487.00px;top:467.00px" width="12" height="12" viewBox="0 0 12 12" fill="none"><path d="M2 3h8L6 9.4z" stroke="#414d5c" stroke-width="1.8" stroke-linejoin="round"/></svg>
<div class="a" style="left:1511.00px;top:464.00px;width:2.00px;height:18.00px;background:#7d7d87"></div>
<div class="t" style="left:1533.00px;top:466.15px;font-size:14px;line-height:14px;font-weight:700;color:#414d5c;;letter-spacing:-0.25px">IPs allocated</div>
<svg class="a" style="left:1687.00px;top:467.00px" width="12" height="12" viewBox="0 0 12 12" fill="none"><path d="M2 3h8L6 9.4z" stroke="#414d5c" stroke-width="1.8" stroke-linejoin="round"/></svg>
<div class="a" style="left:1711.00px;top:464.00px;width:2.00px;height:18.00px;background:#7d7d87"></div>
<div class="t" style="left:1733.00px;top:466.15px;font-size:14px;line-height:14px;font-weight:700;color:#414d5c;;letter-spacing:-0.25px">Region</div>
<svg class="a" style="left:2004.00px;top:467.00px" width="12" height="12" viewBox="0 0 12 12" fill="none"><path d="M2 3h8L6 9.4z" stroke="#414d5c" stroke-width="1.8" stroke-linejoin="round"/></svg>
<div class="a" style="left:2028.00px;top:464.00px;width:2.00px;height:18.00px;background:#7d7d87"></div>
<div class="a" style="left:38.00px;top:491.00px;width:1992.00px;height:1.00px;background:#c6c6cd"></div>
<div class="a" style="left:38.00px;top:531.00px;width:1992.00px;height:1.00px;background:#e9ebed"></div>
<div class="a" style="left:47.00px;top:518.50px;width:2.00px;height:33.00px;background:#c0c0c8"></div>
<div class="a" style="left:42.00px;top:504.50px;width:14.00px;height:14.00px;border:2px solid #2c3440;border-radius:2px;box-sizing:border-box;background:#fff"></div>
<div class="a" style="left:46.00px;top:510.50px;width:6.00px;height:2.00px;background:#2c3440;border-radius:1px"></div>
<div class="t" style="left:63.00px;top:505.15px;font-size:14px;line-height:14px;font-weight:400;color:#5a1e96;text-decoration:underline;text-underline-offset:2px;letter-spacing:0.22px">aws-pool (ipam-pool-0a7aa2c5ba25a8bc3)</div>
<div class="t" style="left:558.00px;top:505.15px;font-size:14px;line-height:14px;font-weight:400;color:#000716;;letter-spacing:-0.2px">IPAM pool CIDR</div>
<svg class="a" style="left:737.00px;top:503.50px" width="16" height="16" viewBox="0 0 16 16" fill="none"><circle cx="7" cy="7" r="6" stroke="#0972d3" stroke-width="2"/><path d="M4 7h6M7 4v6M11.3 11.3 15.5 15.5" stroke="#0972d3" stroke-width="2"/></svg>
<div class="t" style="left:762.00px;top:505.15px;font-size:14px;line-height:14px;font-weight:400;color:#000716;;letter-spacing:0.35px">10.0.0.0/8</div>
<div class="t" style="left:983.00px;top:505.15px;font-size:14px;line-height:14px;font-weight:400;color:#000716;;letter-spacing:0.22px">-</div>
<div class="t" style="left:1183.00px;top:505.15px;font-size:14px;line-height:14px;font-weight:400;color:#000716;;letter-spacing:0.22px">-</div>
<div class="t" style="left:1383.40px;top:505.15px;font-size:14px;line-height:14px;font-weight:400;color:#000716;;letter-spacing:0.35px">758263608750</div>
<div class="t" style="left:1533.00px;top:505.15px;font-size:14px;line-height:14px;font-weight:400;color:#000716;;letter-spacing:0.22px">-</div>
<div class="t" style="left:1733.20px;top:505.15px;font-size:14px;line-height:14px;font-weight:400;color:#000716;;letter-spacing:0.22px">None</div>
<div class="a" style="left:38.00px;top:570.00px;width:1992.00px;height:1.00px;background:#e9ebed"></div>
<div class="a" style="left:67.00px;top:557.50px;width:2.00px;height:150.00px;background:#c0c0c8"></div>
<div class="a" style="left:47.00px;top:549.50px;width:10.00px;height:2.00px;background:#c0c0c8"></div>
<div class="a" style="left:62.00px;top:543.50px;width:14.00px;height:14.00px;border:2px solid #2c3440;border-radius:2px;box-sizing:border-box;background:#fff"></div>
<div class="a" style="left:66.00px;top:549.50px;width:6.00px;height:2.00px;background:#2c3440;border-radius:1px"></div>
<div class="t" style="left:83.00px;top:544.15px;font-size:14px;line-height:14px;font-weight:400;color:#5a1e96;text-decoration:underline;text-underline-offset:2px;letter-spacing:0.304px">aws-pool-eu-west-2 (ipam-pool-0838e508c775eb463)</div>
<div class="t" style="left:558.00px;top:544.15px;font-size:14px;line-height:14px;font-weight:400;color:#000716;;letter-spacing:-0.2px">IPAM pool CIDR</div>
<svg class="a" style="left:737.00px;top:542.50px" width="16" height="16" viewBox="0 0 16 16" fill="none"><circle cx="7" cy="7" r="6" stroke="#0972d3" stroke-width="2"/><path d="M4 7h6M7 4v6M11.3 11.3 15.5 15.5" stroke="#0972d3" stroke-width="2"/></svg>
<div class="t" style="left:762.00px;top:544.15px;font-size:14px;line-height:14px;font-weight:400;color:#000716;;letter-spacing:0.35px">10.100.0.0/16</div>
<div class="t" style="left:983.00px;top:544.15px;font-size:14px;line-height:14px;font-weight:400;color:#000716;;letter-spacing:0.22px">-</div>
<div class="t" style="left:1183.00px;top:544.15px;font-size:14px;line-height:14px;font-weight:400;color:#000716;;letter-spacing:0.22px">-</div>
<div class="t" style="left:1383.40px;top:544.15px;font-size:14px;line-height:14px;font-weight:400;color:#000716;;letter-spacing:0.35px">758263608750</div>
<div class="t" style="left:1533.00px;top:544.15px;font-size:14px;line-height:14px;font-weight:400;color:#000716;;letter-spacing:0.22px">-</div>
<div class="t" style="left:1733.20px;top:544.15px;font-size:14px;line-height:14px;font-weight:400;color:#000716;;letter-spacing:0.22px">eu-west-2</div>
<div class="a" style="left:38.00px;top:609.00px;width:1992.00px;height:1.00px;background:#e9ebed"></div>
<div class="a" style="left:87.00px;top:596.50px;width:2.00px;height:72.00px;background:#c0c0c8"></div>
<div class="a" style="left:67.00px;top:588.50px;width:10.00px;height:2.00px;background:#c0c0c8"></div>
<div class="a" style="left:82.00px;top:582.50px;width:14.00px;height:14.00px;border:2px solid #2c3440;border-radius:2px;box-sizing:border-box;background:#fff"></div>
<div class="a" style="left:86.00px;top:588.50px;width:6.00px;height:2.00px;background:#2c3440;border-radius:1px"></div>
<div class="t" style="left:103.00px;top:583.15px;font-size:14px;line-height:14px;font-weight:400;color:#5a1e96;text-decoration:underline;text-underline-offset:2px;letter-spacing:0.151px">Production-VPC (vpc-059a61be630145c79)</div>
<div class="t" style="left:558.00px;top:583.15px;font-size:14px;line-height:14px;font-weight:400;color:#000716;;letter-spacing:-0.2px">VPC</div>
<svg class="a" style="left:737.00px;top:581.50px" width="16" height="16" viewBox="0 0 16 16" fill="none"><circle cx="7" cy="7" r="6" stroke="#0972d3" stroke-width="2"/><path d="M4 7h6M7 4v6M11.3 11.3 15.5 15.5" stroke="#0972d3" stroke-width="2"/></svg>
<div class="t" style="left:762.00px;top:583.15px;font-size:14px;line-height:14px;font-weight:400;color:#000716;;letter-spacing:0.35px">10.100.0.0/20</div>
<svg class="a" style="left:983.00px;top:581.50px" width="16" height="16" viewBox="0 0 16 16" fill="none"><circle cx="8" cy="8" r="6.9" stroke="#037f0c" stroke-width="1.9"/><path d="M4.8 8.1 7 10.2 11 5.6" stroke="#037f0c" stroke-width="1.9"/></svg>
<div class="t" style="left:1003.50px;top:583.15px;font-size:14px;line-height:14px;font-weight:400;color:#037f0c;;letter-spacing:0.22px">Compliant</div>
<svg class="a" style="left:1183.00px;top:581.50px" width="16" height="16" viewBox="0 0 16 16" fill="none"><circle cx="8" cy="8" r="6.9" stroke="#037f0c" stroke-width="1.9"/><path d="M4.8 8.1 7 10.2 11 5.6" stroke="#037f0c" stroke-width="1.9"/></svg>
<div class="t" style="left:1203.50px;top:583.15px;font-size:14px;line-height:14px;font-weight:400;color:#037f0c;;letter-spacing:0.22px">Nonoverlapping</div>
<div class="t" style="left:1383.40px;top:583.15px;font-size:14px;line-height:14px;font-weight:400;color:#000716;;letter-spacing:0.35px">758263608750</div>
<div class="t" style="left:1533.00px;top:583.15px;font-size:14px;line-height:14px;font-weight:400;color:#000716;;letter-spacing:0.35px">6.25%</div>
<div class="t" style="left:1733.20px;top:583.15px;font-size:14px;line-height:14px;font-weight:400;color:#000716;;letter-spacing:0.22px">eu-west-2</div>
<div class="a" style="left:38.00px;top:648.00px;width:1992.00px;height:1.00px;background:#e9ebed"></div>
<div class="a" style="left:87.00px;top:627.50px;width:10.00px;height:2.00px;background:#c0c0c8"></div>
<div class="t" style="left:100.00px;top:622.15px;font-size:14px;line-height:14px;font-weight:400;color:#0a13d6;text-decoration:underline;text-underline-offset:2px;letter-spacing:0.252px">Public-Subnet-A (subnet-0379ba1516815b02a)</div>
<div class="t" style="left:558.00px;top:622.15px;font-size:14px;line-height:14px;font-weight:400;color:#000716;;letter-spacing:0.22px">Subnet</div>
<svg class="a" style="left:737.00px;top:620.50px" width="16" height="16" viewBox="0 0 16 16" fill="none"><circle cx="7" cy="7" r="6" stroke="#0972d3" stroke-width="2"/><path d="M4 7h6M7 4v6M11.3 11.3 15.5 15.5" stroke="#0972d3" stroke-width="2"/></svg>
<div class="t" style="left:762.00px;top:622.15px;font-size:14px;line-height:14px;font-weight:400;color:#000716;;letter-spacing:0.35px">10.100.0.0/25</div>
<div class="t" style="left:983.00px;top:622.15px;font-size:14px;line-height:14px;font-weight:400;color:#000716;;letter-spacing:0.22px">-</div>
<div class="t" style="left:1183.00px;top:622.15px;font-size:14px;line-height:14px;font-weight:400;color:#000716;;letter-spacing:0.22px">-</div>
<div class="t" style="left:1383.40px;top:622.15px;font-size:14px;line-height:14px;font-weight:400;color:#000716;;letter-spacing:0.35px">758263608750</div>
<div class="t" style="left:1533.00px;top:622.15px;font-size:14px;line-height:14px;font-weight:400;color:#000716;;letter-spacing:0.35px">7.03%</div>
<div class="t" style="left:1733.20px;top:622.15px;font-size:14px;line-height:14px;font-weight:400;color:#000716;;letter-spacing:0.22px">eu-west-2</div>
<div class="a" style="left:38.00px;top:687.00px;width:1992.00px;height:1.00px;background:#e9ebed"></div>
<div class="a" style="left:87.00px;top:666.50px;width:10.00px;height:2.00px;background:#c0c0c8"></div>
<div class="t" style="left:100.00px;top:661.15px;font-size:14px;line-height:14px;font-weight:400;color:#0a13d6;text-decoration:underline;text-underline-offset:2px;letter-spacing:0.239px">Public-Subnet-B (subnet-06999f683c4dcb038)</div>
<div class="t" style="left:558.00px;top:661.15px;font-size:14px;line-height:14px;font-weight:400;color:#000716;;letter-spacing:0.22px">Subnet</div>
<svg class="a" style="left:737.00px;top:659.50px" width="16" height="16" viewBox="0 0 16 16" fill="none"><circle cx="7" cy="7" r="6" stroke="#0972d3" stroke-width="2"/><path d="M4 7h6M7 4v6M11.3 11.3 15.5 15.5" stroke="#0972d3" stroke-width="2"/></svg>
<div class="t" style="left:762.00px;top:661.15px;font-size:14px;line-height:14px;font-weight:400;color:#000716;;letter-spacing:0.35px">10.100.0.128/25</div>
<div class="t" style="left:983.00px;top:661.15px;font-size:14px;line-height:14px;font-weight:400;color:#000716;;letter-spacing:0.22px">-</div>
<div class="t" style="left:1183.00px;top:661.15px;font-size:14px;line-height:14px;font-weight:400;color:#000716;;letter-spacing:0.22px">-</div>
<div class="t" style="left:1383.40px;top:661.15px;font-size:14px;line-height:14px;font-weight:400;color:#000716;;letter-spacing:0.35px">758263608750</div>
<div class="t" style="left:1533.00px;top:661.15px;font-size:14px;line-height:14px;font-weight:400;color:#000716;;letter-spacing:0.35px">3.91%</div>
<div class="t" style="left:1733.20px;top:661.15px;font-size:14px;line-height:14px;font-weight:400;color:#000716;;letter-spacing:0.22px">eu-west-2</div>
<div class="a" style="left:38.00px;top:726.00px;width:1992.00px;height:1.00px;background:#e9ebed"></div>
<div class="a" style="left:67.00px;top:705.50px;width:10.00px;height:2.00px;background:#c0c0c8"></div>
<div class="t" style="left:80.00px;top:700.15px;font-size:14px;line-height:14px;font-weight:400;color:#0a13d6;text-decoration:underline;text-underline-offset:2px;letter-spacing:0.166px">test-vpc (vpc-0a4faee6a32930ce3)</div>
<div class="t" style="left:558.00px;top:700.15px;font-size:14px;line-height:14px;font-weight:400;color:#000716;;letter-spacing:-0.2px">VPC</div>
<svg class="a" style="left:737.00px;top:698.50px" width="16" height="16" viewBox="0 0 16 16" fill="none"><circle cx="7" cy="7" r="6" stroke="#0972d3" stroke-width="2"/><path d="M4 7h6M7 4v6M11.3 11.3 15.5 15.5" stroke="#0972d3" stroke-width="2"/></svg>
<div class="t" style="left:762.00px;top:700.15px;font-size:14px;line-height:14px;font-weight:400;color:#000716;;letter-spacing:0.35px">10.100.16.0/24</div>
<svg class="a" style="left:983.00px;top:698.50px" width="16" height="16" viewBox="0 0 16 16" fill="none"><circle cx="8" cy="8" r="6.9" stroke="#037f0c" stroke-width="1.9"/><path d="M4.8 8.1 7 10.2 11 5.6" stroke="#037f0c" stroke-width="1.9"/></svg>
<div class="t" style="left:1003.50px;top:700.15px;font-size:14px;line-height:14px;font-weight:400;color:#037f0c;;letter-spacing:0.22px">Compliant</div>
<svg class="a" style="left:1183.00px;top:698.50px" width="16" height="16" viewBox="0 0 16 16" fill="none"><circle cx="8" cy="8" r="6.9" stroke="#037f0c" stroke-width="1.9"/><path d="M4.8 8.1 7 10.2 11 5.6" stroke="#037f0c" stroke-width="1.9"/></svg>
<div class="t" style="left:1203.50px;top:700.15px;font-size:14px;line-height:14px;font-weight:400;color:#037f0c;;letter-spacing:0.22px">Nonoverlapping</div>
<div class="t" style="left:1383.40px;top:700.15px;font-size:14px;line-height:14px;font-weight:400;color:#000716;;letter-spacing:0.35px">758263608750</div>
<div class="t" style="left:1533.00px;top:700.15px;font-size:14px;line-height:14px;font-weight:400;color:#000716;;letter-spacing:0.35px">0.00%</div>
<div class="t" style="left:1733.20px;top:700.15px;font-size:14px;line-height:14px;font-weight:400;color:#000716;;letter-spacing:0.22px">eu-west-2</div>
<div class="a" style="left:38.00px;top:765.00px;width:1992.00px;height:1.00px;background:#e9ebed"></div>
<div class="a" style="left:47.00px;top:752.50px;width:2.00px;height:72.00px;background:#c0c0c8"></div>
<div class="a" style="left:42.00px;top:738.50px;width:14.00px;height:14.00px;border:2px solid #2c3440;border-radius:2px;box-sizing:border-box;background:#fff"></div>
<div class="a" style="left:46.00px;top:744.50px;width:6.00px;height:2.00px;background:#2c3440;border-radius:1px"></div>
<div class="t" style="left:63.00px;top:739.15px;font-size:14px;line-height:14px;font-weight:400;color:#0a13d6;text-decoration:underline;text-underline-offset:2px;letter-spacing:0.083px">Management-VPC (vpc-0bbcec4ae8894d62d)</div>
<div class="t" style="left:558.00px;top:739.15px;font-size:14px;line-height:14px;font-weight:400;color:#000716;;letter-spacing:-0.2px">VPC</div>
<svg class="a" style="left:737.00px;top:737.50px" width="16" height="16" viewBox="0 0 16 16" fill="none"><circle cx="7" cy="7" r="6" stroke="#0972d3" stroke-width="2"/><path d="M4 7h6M7 4v6M11.3 11.3 15.5 15.5" stroke="#0972d3" stroke-width="2"/></svg>
<div class="t" style="left:762.00px;top:739.15px;font-size:14px;line-height:14px;font-weight:400;color:#000716;;letter-spacing:0.35px">10.20.0.0/16</div>
<svg class="a" style="left:983.00px;top:737.50px" width="16" height="16" viewBox="0 0 16 16" fill="none"><circle cx="8" cy="8" r="6.9" stroke="#5f6b7a" stroke-width="1.9"/><path d="M5 8h6" stroke="#5f6b7a" stroke-width="1.9"/></svg>
<div class="t" style="left:1003.50px;top:739.15px;font-size:14px;line-height:14px;font-weight:400;color:#5f6b7a;;letter-spacing:0.22px">Unmanaged</div>
<svg class="a" style="left:1183.00px;top:737.50px" width="16" height="16" viewBox="0 0 16 16" fill="none"><circle cx="8" cy="8" r="6.9" stroke="#037f0c" stroke-width="1.9"/><path d="M4.8 8.1 7 10.2 11 5.6" stroke="#037f0c" stroke-width="1.9"/></svg>
<div class="t" style="left:1203.50px;top:739.15px;font-size:14px;line-height:14px;font-weight:400;color:#037f0c;;letter-spacing:0.22px">Nonoverlapping</div>
<div class="t" style="left:1383.40px;top:739.15px;font-size:14px;line-height:14px;font-weight:400;color:#000716;;letter-spacing:0.35px">736031713230</div>
<div class="t" style="left:1533.00px;top:739.15px;font-size:14px;line-height:14px;font-weight:400;color:#000716;;letter-spacing:0.35px">0.78%</div>
<div class="t" style="left:1733.20px;top:739.15px;font-size:14px;line-height:14px;font-weight:400;color:#000716;;letter-spacing:0.22px">eu-west-2</div>
<div class="a" style="left:38.00px;top:804.00px;width:1992.00px;height:1.00px;background:#e9ebed"></div>
<div class="a" style="left:47.00px;top:783.50px;width:10.00px;height:2.00px;background:#c0c0c8"></div>
<div class="t" style="left:60.00px;top:778.15px;font-size:14px;line-height:14px;font-weight:400;color:#0a13d6;text-decoration:underline;text-underline-offset:2px;letter-spacing:0.147px">Management-VPC-Public-Subnet (subnet-06a9c4d2153e66e4b)</div>
<div class="t" style="left:558.00px;top:778.15px;font-size:14px;line-height:14px;font-weight:400;color:#000716;;letter-spacing:0.22px">Subnet</div>
<svg class="a" style="left:737.00px;top:776.50px" width="16" height="16" viewBox="0 0 16 16" fill="none"><circle cx="7" cy="7" r="6" stroke="#0972d3" stroke-width="2"/><path d="M4 7h6M7 4v6M11.3 11.3 15.5 15.5" stroke="#0972d3" stroke-width="2"/></svg>
<div class="t" style="left:762.00px;top:778.15px;font-size:14px;line-height:14px;font-weight:400;color:#000716;;letter-spacing:0.35px">10.20.1.0/24</div>
<div class="t" style="left:983.00px;top:778.15px;font-size:14px;line-height:14px;font-weight:400;color:#000716;;letter-spacing:0.22px">-</div>
<div class="t" style="left:1183.00px;top:778.15px;font-size:14px;line-height:14px;font-weight:400;color:#000716;;letter-spacing:0.22px">-</div>
<div class="t" style="left:1383.40px;top:778.15px;font-size:14px;line-height:14px;font-weight:400;color:#000716;;letter-spacing:0.35px">736031713230</div>
<div class="t" style="left:1533.00px;top:778.15px;font-size:14px;line-height:14px;font-weight:400;color:#000716;;letter-spacing:0.35px">2.73%</div>
<div class="t" style="left:1733.20px;top:778.15px;font-size:14px;line-height:14px;font-weight:400;color:#000716;;letter-spacing:0.22px">eu-west-2</div>
<div class="a" style="left:38.00px;top:843.00px;width:1992.00px;height:1.00px;background:#e9ebed"></div>
<div class="a" style="left:47.00px;top:822.50px;width:10.00px;height:2.00px;background:#c0c0c8"></div>
<div class="t" style="left:60.00px;top:817.15px;font-size:14px;line-height:14px;font-weight:400;color:#0a13d6;text-decoration:underline;text-underline-offset:2px;letter-spacing:0.136px">Management-VPC-Private-Subnet (subnet-0a194de42301ac7d7)</div>
<div class="t" style="left:558.00px;top:817.15px;font-size:14px;line-height:14px;font-weight:400;color:#000716;;letter-spacing:0.22px">Subnet</div>
<svg class="a" style="left:737.00px;top:815.50px" width="16" height="16" viewBox="0 0 16 16" fill="none"><circle cx="7" cy="7" r="6" stroke="#0972d3" stroke-width="2"/><path d="M4 7h6M7 4v6M11.3 11.3 15.5 15.5" stroke="#0972d3" stroke-width="2"/></svg>
<div class="t" style="left:762.00px;top:817.15px;font-size:14px;line-height:14px;font-weight:400;color:#000716;;letter-spacing:0.35px">10.20.2.0/24</div>
<div class="t" style="left:983.00px;top:817.15px;font-size:14px;line-height:14px;font-weight:400;color:#000716;;letter-spacing:0.22px">-</div>
<div class="t" style="left:1183.00px;top:817.15px;font-size:14px;line-height:14px;font-weight:400;color:#000716;;letter-spacing:0.22px">-</div>
<div class="t" style="left:1383.40px;top:817.15px;font-size:14px;line-height:14px;font-weight:400;color:#000716;;letter-spacing:0.35px">736031713230</div>
<div class="t" style="left:1533.00px;top:817.15px;font-size:14px;line-height:14px;font-weight:400;color:#000716;;letter-spacing:0.35px">1.95%</div>
<div class="t" style="left:1733.20px;top:817.15px;font-size:14px;line-height:14px;font-weight:400;color:#000716;;letter-spacing:0.22px">eu-west-2</div>
<div class="a" style="left:38.00px;top:882.00px;width:1992.00px;height:1.00px;background:#e9ebed"></div>
<div class="a" style="left:47.00px;top:869.50px;width:2.00px;height:38.00px;background:#c0c0c8"></div>
<div class="a" style="left:42.00px;top:855.50px;width:14.00px;height:14.00px;border:2px solid #2c3440;border-radius:2px;box-sizing:border-box;background:#fff"></div>
<div class="a" style="left:46.00px;top:861.50px;width:6.00px;height:2.00px;background:#2c3440;border-radius:1px"></div>
<div class="t" style="left:63.00px;top:856.15px;font-size:14px;line-height:14px;font-weight:400;color:#5a1e96;text-decoration:underline;text-underline-offset:2px;letter-spacing:0.299px">tailscale-pool (ipam-pool-0ae8b4458c124996b)</div>
<div class="t" style="left:558.00px;top:856.15px;font-size:14px;line-height:14px;font-weight:400;color:#000716;;letter-spacing:-0.2px">IPAM pool CIDR</div>
<svg class="a" style="left:737.00px;top:854.50px" width="16" height="16" viewBox="0 0 16 16" fill="none"><circle cx="7" cy="7" r="6" stroke="#0972d3" stroke-width="2"/><path d="M4 7h6M7 4v6M11.3 11.3 15.5 15.5" stroke="#0972d3" stroke-width="2"/></svg>
<div class="t" style="left:762.00px;top:856.15px;font-size:14px;line-height:14px;font-weight:400;color:#000716;;letter-spacing:0.35px">100.64.0.0/10</div>
<div class="t" style="left:983.00px;top:856.15px;font-size:14px;line-height:14px;font-weight:400;color:#000716;;letter-spacing:0.22px">-</div>
<div class="t" style="left:1183.00px;top:856.15px;font-size:14px;line-height:14px;font-weight:400;color:#000716;;letter-spacing:0.22px">-</div>
<div class="t" style="left:1383.40px;top:856.15px;font-size:14px;line-height:14px;font-weight:400;color:#000716;;letter-spacing:0.35px">758263608750</div>
<div class="t" style="left:1533.00px;top:856.15px;font-size:14px;line-height:14px;font-weight:400;color:#000716;;letter-spacing:0.22px">-</div>
<div class="t" style="left:1733.20px;top:856.15px;font-size:14px;line-height:14px;font-weight:400;color:#000716;;letter-spacing:0.22px">None</div>
<div class="a" style="left:38.00px;top:921.00px;width:1992.00px;height:1.00px;background:#e9ebed"></div>
<div class="a" style="left:47.00px;top:895.50px;width:10.00px;height:2.00px;background:#c0c0c8"></div>
<div class="t" style="left:60.00px;top:885.15px;font-size:14px;line-height:14px;font-weight:400;color:#000716;letter-spacing:0.338px">tailscale-overlay-network (ipam-pool-</div>
<div class="t" style="left:60.00px;top:905.15px;font-size:14px;line-height:14px;font-weight:400;color:#000716;letter-spacing:0.357px">alloc-06f63f16510ba44e58611d096cc06c559)</div>
<div class="t" style="left:558.00px;top:895.15px;font-size:14px;line-height:14px;font-weight:400;color:#000716;;letter-spacing:0.22px">Custom allocation</div>
<svg class="a" style="left:737.00px;top:893.50px" width="16" height="16" viewBox="0 0 16 16" fill="none"><circle cx="7" cy="7" r="6" stroke="#0972d3" stroke-width="2"/><path d="M4 7h6M7 4v6M11.3 11.3 15.5 15.5" stroke="#0972d3" stroke-width="2"/></svg>
<div class="t" style="left:762.00px;top:895.15px;font-size:14px;line-height:14px;font-weight:400;color:#000716;;letter-spacing:0.35px">100.64.0.0/10</div>
<div class="t" style="left:983.00px;top:895.15px;font-size:14px;line-height:14px;font-weight:400;color:#000716;;letter-spacing:0.22px">-</div>
<div class="t" style="left:1183.00px;top:895.15px;font-size:14px;line-height:14px;font-weight:400;color:#000716;;letter-spacing:0.22px">-</div>
<div class="t" style="left:1383.40px;top:895.15px;font-size:14px;line-height:14px;font-weight:400;color:#000716;;letter-spacing:0.35px">758263608750</div>
<div class="t" style="left:1533.00px;top:895.15px;font-size:14px;line-height:14px;font-weight:400;color:#000716;;letter-spacing:0.22px">-</div>
<div class="t" style="left:1733.20px;top:895.15px;font-size:14px;line-height:14px;font-weight:400;color:#000716;;letter-spacing:0.22px">None</div>
<div class="a" style="left:38.00px;top:960.00px;width:1992.00px;height:1.00px;background:#e9ebed"></div>
<div class="a" style="left:47.00px;top:947.50px;width:2.00px;height:111.00px;background:#c0c0c8"></div>
<div class="a" style="left:42.00px;top:933.50px;width:14.00px;height:14.00px;border:2px solid #2c3440;border-radius:2px;box-sizing:border-box;background:#fff"></div>
<div class="a" style="left:46.00px;top:939.50px;width:6.00px;height:2.00px;background:#2c3440;border-radius:1px"></div>
<div class="t" style="left:63.00px;top:934.15px;font-size:14px;line-height:14px;font-weight:400;color:#0a13d6;text-decoration:underline;text-underline-offset:2px;letter-spacing:0.423px">vpc-fd4adb95</div>
<div class="t" style="left:558.00px;top:934.15px;font-size:14px;line-height:14px;font-weight:400;color:#000716;;letter-spacing:-0.2px">VPC</div>
<svg class="a" style="left:737.00px;top:932.50px" width="16" height="16" viewBox="0 0 16 16" fill="none"><circle cx="7" cy="7" r="6" stroke="#0972d3" stroke-width="2"/><path d="M4 7h6M7 4v6M11.3 11.3 15.5 15.5" stroke="#0972d3" stroke-width="2"/></svg>
<div class="t" style="left:762.00px;top:934.15px;font-size:14px;line-height:14px;font-weight:400;color:#000716;;letter-spacing:0.35px">172.31.0.0/16</div>
<svg class="a" style="left:983.00px;top:932.50px" width="16" height="16" viewBox="0 0 16 16" fill="none"><circle cx="8" cy="8" r="6.9" stroke="#5f6b7a" stroke-width="1.9"/><path d="M5 8h6" stroke="#5f6b7a" stroke-width="1.9"/></svg>
<div class="t" style="left:1003.50px;top:934.15px;font-size:14px;line-height:14px;font-weight:400;color:#5f6b7a;;letter-spacing:0.22px">Unmanaged</div>
<svg class="a" style="left:1183.00px;top:932.50px" width="16" height="16" viewBox="0 0 16 16" fill="none"><circle cx="8" cy="8" r="6.9" stroke="#d91515" stroke-width="1.9"/><path d="M5.6 5.6l4.8 4.8M10.4 5.6l-4.8 4.8" stroke="#d91515" stroke-width="1.9"/></svg>
<div class="t" style="left:1203.50px;top:934.15px;font-size:14px;line-height:14px;font-weight:400;color:#d91515;;letter-spacing:0.22px">Overlapping</div>
<div class="t" style="left:1383.40px;top:934.15px;font-size:14px;line-height:14px;font-weight:400;color:#000716;;letter-spacing:0.35px">660815953012</div>
<div class="t" style="left:1533.00px;top:934.15px;font-size:14px;line-height:14px;font-weight:400;color:#000716;;letter-spacing:0.35px">18.75%</div>
<div class="t" style="left:1733.20px;top:934.15px;font-size:14px;line-height:14px;font-weight:400;color:#000716;;letter-spacing:0.22px">eu-west-2</div>
<div class="a" style="left:38.00px;top:999.00px;width:1992.00px;height:1.00px;background:#e9ebed"></div>
<div class="a" style="left:47.00px;top:978.50px;width:10.00px;height:2.00px;background:#c0c0c8"></div>
<div class="t" style="left:60.00px;top:973.15px;font-size:14px;line-height:14px;font-weight:400;color:#0a13d6;text-decoration:underline;text-underline-offset:2px;letter-spacing:0.321px">subnet-b35dc6da</div>
<div class="t" style="left:558.00px;top:973.15px;font-size:14px;line-height:14px;font-weight:400;color:#000716;;letter-spacing:0.22px">Subnet</div>
<svg class="a" style="left:737.00px;top:971.50px" width="16" height="16" viewBox="0 0 16 16" fill="none"><circle cx="7" cy="7" r="6" stroke="#0972d3" stroke-width="2"/><path d="M4 7h6M7 4v6M11.3 11.3 15.5 15.5" stroke="#0972d3" stroke-width="2"/></svg>
<div class="t" style="left:762.00px;top:973.15px;font-size:14px;line-height:14px;font-weight:400;color:#000716;;letter-spacing:0.35px">172.31.0.0/20</div>
<div class="t" style="left:983.00px;top:973.15px;font-size:14px;line-height:14px;font-weight:400;color:#000716;;letter-spacing:0.22px">-</div>
<div class="t" style="left:1183.00px;top:973.15px;font-size:14px;line-height:14px;font-weight:400;color:#000716;;letter-spacing:0.22px">-</div>
<div class="t" style="left:1383.40px;top:973.15px;font-size:14px;line-height:14px;font-weight:400;color:#000716;;letter-spacing:0.35px">660815953012</div>
<div class="t" style="left:1533.00px;top:973.15px;font-size:14px;line-height:14px;font-weight:400;color:#000716;;letter-spacing:0.35px">0.12%</div>
<div class="t" style="left:1733.20px;top:973.15px;font-size:14px;line-height:14px;font-weight:400;color:#000716;;letter-spacing:0.22px">eu-west-2</div>
<div class="a" style="left:38.00px;top:1038.00px;width:1992.00px;height:1.00px;background:#e9ebed"></div>
<div class="a" style="left:47.00px;top:1017.50px;width:10.00px;height:2.00px;background:#c0c0c8"></div>
<div class="t" style="left:60.00px;top:1012.15px;font-size:14px;line-height:14px;font-weight:400;color:#0a13d6;text-decoration:underline;text-underline-offset:2px;letter-spacing:0.472px">subnet-358d2a4f</div>
<div class="t" style="left:558.00px;top:1012.15px;font-size:14px;line-height:14px;font-weight:400;color:#000716;;letter-spacing:0.22px">Subnet</div>
<svg class="a" style="left:737.00px;top:1010.50px" width="16" height="16" viewBox="0 0 16 16" fill="none"><circle cx="7" cy="7" r="6" stroke="#0972d3" stroke-width="2"/><path d="M4 7h6M7 4v6M11.3 11.3 15.5 15.5" stroke="#0972d3" stroke-width="2"/></svg>
<div class="t" style="left:762.00px;top:1012.15px;font-size:14px;line-height:14px;font-weight:400;color:#000716;;letter-spacing:0.35px">172.31.16.0/20</div>
<div class="t" style="left:983.00px;top:1012.15px;font-size:14px;line-height:14px;font-weight:400;color:#000716;;letter-spacing:0.22px">-</div>
<div class="t" style="left:1183.00px;top:1012.15px;font-size:14px;line-height:14px;font-weight:400;color:#000716;;letter-spacing:0.22px">-</div>
<div class="t" style="left:1383.40px;top:1012.15px;font-size:14px;line-height:14px;font-weight:400;color:#000716;;letter-spacing:0.35px">660815953012</div>
<div class="t" style="left:1533.00px;top:1012.15px;font-size:14px;line-height:14px;font-weight:400;color:#000716;;letter-spacing:0.35px">0.12%</div>
<div class="t" style="left:1733.20px;top:1012.15px;font-size:14px;line-height:14px;font-weight:400;color:#000716;;letter-spacing:0.22px">eu-west-2</div>
<div class="a" style="left:38.00px;top:1077.00px;width:1992.00px;height:1.00px;background:#e9ebed"></div>
<div class="a" style="left:47.00px;top:1056.50px;width:10.00px;height:2.00px;background:#c0c0c8"></div>
<div class="t" style="left:60.00px;top:1051.15px;font-size:14px;line-height:14px;font-weight:400;color:#0a13d6;text-decoration:underline;text-underline-offset:2px;letter-spacing:0.336px">subnet-7d709a31</div>
<div class="t" style="left:558.00px;top:1051.15px;font-size:14px;line-height:14px;font-weight:400;color:#000716;;letter-spacing:0.22px">Subnet</div>
<svg class="a" style="left:737.00px;top:1049.50px" width="16" height="16" viewBox="0 0 16 16" fill="none"><circle cx="7" cy="7" r="6" stroke="#0972d3" stroke-width="2"/><path d="M4 7h6M7 4v6M11.3 11.3 15.5 15.5" stroke="#0972d3" stroke-width="2"/></svg>
<div class="t" style="left:762.00px;top:1051.15px;font-size:14px;line-height:14px;font-weight:400;color:#000716;;letter-spacing:0.35px">172.31.32.0/20</div>
<div class="t" style="left:983.00px;top:1051.15px;font-size:14px;line-height:14px;font-weight:400;color:#000716;;letter-spacing:0.22px">-</div>
<div class="t" style="left:1183.00px;top:1051.15px;font-size:14px;line-height:14px;font-weight:400;color:#000716;;letter-spacing:0.22px">-</div>
<div class="t" style="left:1383.40px;top:1051.15px;font-size:14px;line-height:14px;font-weight:400;color:#000716;;letter-spacing:0.35px">660815953012</div>
<div class="t" style="left:1533.00px;top:1051.15px;font-size:14px;line-height:14px;font-weight:400;color:#000716;;letter-spacing:0.35px">0.12%</div>
<div class="t" style="left:1733.20px;top:1051.15px;font-size:14px;line-height:14px;font-weight:400;color:#000716;;letter-spacing:0.22px">eu-west-2</div>
<div class="a" style="left:38.00px;top:1116.00px;width:1992.00px;height:1.00px;background:#e9ebed"></div>
<div class="a" style="left:47.00px;top:1103.50px;width:2.00px;height:111.00px;background:#c0c0c8"></div>
<div class="a" style="left:42.00px;top:1089.50px;width:14.00px;height:14.00px;border:2px solid #2c3440;border-radius:2px;box-sizing:border-box;background:#fff"></div>
<div class="a" style="left:46.00px;top:1095.50px;width:6.00px;height:2.00px;background:#2c3440;border-radius:1px"></div>
<div class="t" style="left:63.00px;top:1090.15px;font-size:14px;line-height:14px;font-weight:400;color:#0a13d6;text-decoration:underline;text-underline-offset:2px;letter-spacing:0.35px">vpc-3441715c</div>
<div class="t" style="left:558.00px;top:1090.15px;font-size:14px;line-height:14px;font-weight:400;color:#000716;;letter-spacing:-0.2px">VPC</div>
<svg class="a" style="left:737.00px;top:1088.50px" width="16" height="16" viewBox="0 0 16 16" fill="none"><circle cx="7" cy="7" r="6" stroke="#0972d3" stroke-width="2"/><path d="M4 7h6M7 4v6M11.3 11.3 15.5 15.5" stroke="#0972d3" stroke-width="2"/></svg>
<div class="t" style="left:762.00px;top:1090.15px;font-size:14px;line-height:14px;font-weight:400;color:#000716;;letter-spacing:0.35px">172.31.0.0/16</div>
<svg class="a" style="left:983.00px;top:1088.50px" width="16" height="16" viewBox="0 0 16 16" fill="none"><circle cx="8" cy="8" r="6.9" stroke="#5f6b7a" stroke-width="1.9"/><path d="M5 8h6" stroke="#5f6b7a" stroke-width="1.9"/></svg>
<div class="t" style="left:1003.50px;top:1090.15px;font-size:14px;line-height:14px;font-weight:400;color:#5f6b7a;;letter-spacing:0.22px">Unmanaged</div>
<svg class="a" style="left:1183.00px;top:1088.50px" width="16" height="16" viewBox="0 0 16 16" fill="none"><circle cx="8" cy="8" r="6.9" stroke="#d91515" stroke-width="1.9"/><path d="M5.6 5.6l4.8 4.8M10.4 5.6l-4.8 4.8" stroke="#d91515" stroke-width="1.9"/></svg>
<div class="t" style="left:1203.50px;top:1090.15px;font-size:14px;line-height:14px;font-weight:400;color:#d91515;;letter-spacing:0.22px">Overlapping</div>
<div class="t" style="left:1383.40px;top:1090.15px;font-size:14px;line-height:14px;font-weight:400;color:#000716;;letter-spacing:0.35px">834322802958</div>
<div class="t" style="left:1533.00px;top:1090.15px;font-size:14px;line-height:14px;font-weight:400;color:#000716;;letter-spacing:0.35px">18.75%</div>
<div class="t" style="left:1733.20px;top:1090.15px;font-size:14px;line-height:14px;font-weight:400;color:#000716;;letter-spacing:0.22px">eu-west-2</div>
<div class="a" style="left:38.00px;top:1155.00px;width:1992.00px;height:1.00px;background:#e9ebed"></div>
<div class="a" style="left:47.00px;top:1134.50px;width:10.00px;height:2.00px;background:#c0c0c8"></div>
<div class="t" style="left:60.00px;top:1129.15px;font-size:14px;line-height:14px;font-weight:400;color:#0a13d6;text-decoration:underline;text-underline-offset:2px;letter-spacing:0.156px">subnet-c5102aac</div>
<div class="t" style="left:558.00px;top:1129.15px;font-size:14px;line-height:14px;font-weight:400;color:#000716;;letter-spacing:0.22px">Subnet</div>
<svg class="a" style="left:737.00px;top:1127.50px" width="16" height="16" viewBox="0 0 16 16" fill="none"><circle cx="7" cy="7" r="6" stroke="#0972d3" stroke-width="2"/><path d="M4 7h6M7 4v6M11.3 11.3 15.5 15.5" stroke="#0972d3" stroke-width="2"/></svg>
<div class="t" style="left:762.00px;top:1129.15px;font-size:14px;line-height:14px;font-weight:400;color:#000716;;letter-spacing:0.35px">172.31.0.0/20</div>
<div class="t" style="left:983.00px;top:1129.15px;font-size:14px;line-height:14px;font-weight:400;color:#000716;;letter-spacing:0.22px">-</div>
<div class="t" style="left:1183.00px;top:1129.15px;font-size:14px;line-height:14px;font-weight:400;color:#000716;;letter-spacing:0.22px">-</div>
<div class="t" style="left:1383.40px;top:1129.15px;font-size:14px;line-height:14px;font-weight:400;color:#000716;;letter-spacing:0.35px">834322802958</div>
<div class="t" style="left:1533.00px;top:1129.15px;font-size:14px;line-height:14px;font-weight:400;color:#000716;;letter-spacing:0.35px">0.12%</div>
<div class="t" style="left:1733.20px;top:1129.15px;font-size:14px;line-height:14px;font-weight:400;color:#000716;;letter-spacing:0.22px">eu-west-2</div>
<div class="a" style="left:38.00px;top:1194.00px;width:1992.00px;height:1.00px;background:#e9ebed"></div>
<div class="a" style="left:47.00px;top:1173.50px;width:10.00px;height:2.00px;background:#c0c0c8"></div>
<div class="t" style="left:60.00px;top:1168.15px;font-size:14px;line-height:14px;font-weight:400;color:#0a13d6;text-decoration:underline;text-underline-offset:2px;letter-spacing:0.507px">subnet-f9296f83</div>
<div class="t" style="left:558.00px;top:1168.15px;font-size:14px;line-height:14px;font-weight:400;color:#000716;;letter-spacing:0.22px">Subnet</div>
<svg class="a" style="left:737.00px;top:1166.50px" width="16" height="16" viewBox="0 0 16 16" fill="none"><circle cx="7" cy="7" r="6" stroke="#0972d3" stroke-width="2"/><path d="M4 7h6M7 4v6M11.3 11.3 15.5 15.5" stroke="#0972d3" stroke-width="2"/></svg>
<div class="t" style="left:762.00px;top:1168.15px;font-size:14px;line-height:14px;font-weight:400;color:#000716;;letter-spacing:0.35px">172.31.16.0/20</div>
<div class="t" style="left:983.00px;top:1168.15px;font-size:14px;line-height:14px;font-weight:400;color:#000716;;letter-spacing:0.22px">-</div>
<div class="t" style="left:1183.00px;top:1168.15px;font-size:14px;line-height:14px;font-weight:400;color:#000716;;letter-spacing:0.22px">-</div>
<div class="t" style="left:1383.40px;top:1168.15px;font-size:14px;line-height:14px;font-weight:400;color:#000716;;letter-spacing:0.35px">834322802958</div>
<div class="t" style="left:1533.00px;top:1168.15px;font-size:14px;line-height:14px;font-weight:400;color:#000716;;letter-spacing:0.35px">0.12%</div>
<div class="t" style="left:1733.20px;top:1168.15px;font-size:14px;line-height:14px;font-weight:400;color:#000716;;letter-spacing:0.22px">eu-west-2</div>
<div class="a" style="left:38.00px;top:1233.00px;width:1992.00px;height:1.00px;background:#e9ebed"></div>
<div class="a" style="left:47.00px;top:1212.50px;width:10.00px;height:2.00px;background:#c0c0c8"></div>
<div class="t" style="left:60.00px;top:1207.15px;font-size:14px;line-height:14px;font-weight:400;color:#0a13d6;text-decoration:underline;text-underline-offset:2px;letter-spacing:0.336px">subnet-ab0491e7</div>
<div class="t" style="left:558.00px;top:1207.15px;font-size:14px;line-height:14px;font-weight:400;color:#000716;;letter-spacing:0.22px">Subnet</div>
<svg class="a" style="left:737.00px;top:1205.50px" width="16" height="16" viewBox="0 0 16 16" fill="none"><circle cx="7" cy="7" r="6" stroke="#0972d3" stroke-width="2"/><path d="M4 7h6M7 4v6M11.3 11.3 15.5 15.5" stroke="#0972d3" stroke-width="2"/></svg>
<div class="t" style="left:762.00px;top:1207.15px;font-size:14px;line-height:14px;font-weight:400;color:#000716;;letter-spacing:0.35px">172.31.32.0/20</div>
<div class="t" style="left:983.00px;top:1207.15px;font-size:14px;line-height:14px;font-weight:400;color:#000716;;letter-spacing:0.22px">-</div>
<div class="t" style="left:1183.00px;top:1207.15px;font-size:14px;line-height:14px;font-weight:400;color:#000716;;letter-spacing:0.22px">-</div>
<div class="t" style="left:1383.40px;top:1207.15px;font-size:14px;line-height:14px;font-weight:400;color:#000716;;letter-spacing:0.35px">834322802958</div>
<div class="t" style="left:1533.00px;top:1207.15px;font-size:14px;line-height:14px;font-weight:400;color:#000716;;letter-spacing:0.35px">0.12%</div>
<div class="t" style="left:1733.20px;top:1207.15px;font-size:14px;line-height:14px;font-weight:400;color:#000716;;letter-spacing:0.22px">eu-west-2</div>
<div class="a" style="left:38.00px;top:1272.00px;width:1992.00px;height:1.00px;background:#e9ebed"></div>
<div class="a" style="left:47.00px;top:1259.50px;width:2.00px;height:72.00px;background:#c0c0c8"></div>
<div class="a" style="left:42.00px;top:1245.50px;width:14.00px;height:14.00px;border:2px solid #2c3440;border-radius:2px;box-sizing:border-box;background:#fff"></div>
<div class="a" style="left:46.00px;top:1251.50px;width:6.00px;height:2.00px;background:#2c3440;border-radius:1px"></div>
<div class="t" style="left:63.00px;top:1246.15px;font-size:14px;line-height:14px;font-weight:400;color:#0a13d6;text-decoration:underline;text-underline-offset:2px;letter-spacing:0.001px">Sample-VPC (vpc-06aec8e9432e7c2db)</div>
<div class="t" style="left:558.00px;top:1246.15px;font-size:14px;line-height:14px;font-weight:400;color:#000716;;letter-spacing:-0.2px">VPC</div>
<svg class="a" style="left:737.00px;top:1244.50px" width="16" height="16" viewBox="0 0 16 16" fill="none"><circle cx="7" cy="7" r="6" stroke="#0972d3" stroke-width="2"/><path d="M4 7h6M7 4v6M11.3 11.3 15.5 15.5" stroke="#0972d3" stroke-width="2"/></svg>
<div class="t" style="left:762.00px;top:1246.15px;font-size:14px;line-height:14px;font-weight:400;color:#000716;;letter-spacing:0.35px">192.168.0.0/20</div>
<svg class="a" style="left:983.00px;top:1244.50px" width="16" height="16" viewBox="0 0 16 16" fill="none"><circle cx="8" cy="8" r="6.9" stroke="#5f6b7a" stroke-width="1.9"/><path d="M5 8h6" stroke="#5f6b7a" stroke-width="1.9"/></svg>
<div class="t" style="left:1003.50px;top:1246.15px;font-size:14px;line-height:14px;font-weight:400;color:#5f6b7a;;letter-spacing:0.22px">Unmanaged</div>
<svg class="a" style="left:1183.00px;top:1244.50px" width="16" height="16" viewBox="0 0 16 16" fill="none"><circle cx="8" cy="8" r="6.9" stroke="#d91515" stroke-width="1.9"/><path d="M5.6 5.6l4.8 4.8M10.4 5.6l-4.8 4.8" stroke="#d91515" stroke-width="1.9"/></svg>
<div class="t" style="left:1203.50px;top:1246.15px;font-size:14px;line-height:14px;font-weight:400;color:#d91515;;letter-spacing:0.22px">Overlapping</div>
<div class="t" style="left:1383.40px;top:1246.15px;font-size:14px;line-height:14px;font-weight:400;color:#000716;;letter-spacing:0.35px">736031713230</div>
<div class="t" style="left:1533.00px;top:1246.15px;font-size:14px;line-height:14px;font-weight:400;color:#000716;;letter-spacing:0.35px">12.50%</div>
<div class="t" style="left:1733.20px;top:1246.15px;font-size:14px;line-height:14px;font-weight:400;color:#000716;;letter-spacing:0.22px">eu-west-2</div>
<div class="a" style="left:38.00px;top:1311.00px;width:1992.00px;height:1.00px;background:#e9ebed"></div>
<div class="a" style="left:47.00px;top:1290.50px;width:10.00px;height:2.00px;background:#c0c0c8"></div>
<div class="t" style="left:60.00px;top:1285.15px;font-size:14px;line-height:14px;font-weight:400;color:#0a13d6;text-decoration:underline;text-underline-offset:2px;letter-spacing:0.246px">Public-Subnet-A (subnet-0e2f45ef3529ec268)</div>
<div class="t" style="left:558.00px;top:1285.15px;font-size:14px;line-height:14px;font-weight:400;color:#000716;;letter-spacing:0.22px">Subnet</div>
<svg class="a" style="left:737.00px;top:1283.50px" width="16" height="16" viewBox="0 0 16 16" fill="none"><circle cx="7" cy="7" r="6" stroke="#0972d3" stroke-width="2"/><path d="M4 7h6M7 4v6M11.3 11.3 15.5 15.5" stroke="#0972d3" stroke-width="2"/></svg>
<div class="t" style="left:762.00px;top:1285.15px;font-size:14px;line-height:14px;font-weight:400;color:#000716;;letter-spacing:0.35px">192.168.10.0/24</div>
<div class="t" style="left:983.00px;top:1285.15px;font-size:14px;line-height:14px;font-weight:400;color:#000716;;letter-spacing:0.22px">-</div>
<div class="t" style="left:1183.00px;top:1285.15px;font-size:14px;line-height:14px;font-weight:400;color:#000716;;letter-spacing:0.22px">-</div>
<div class="t" style="left:1383.40px;top:1285.15px;font-size:14px;line-height:14px;font-weight:400;color:#000716;;letter-spacing:0.35px">736031713230</div>
<div class="t" style="left:1533.00px;top:1285.15px;font-size:14px;line-height:14px;font-weight:400;color:#000716;;letter-spacing:0.35px">1.95%</div>
<div class="t" style="left:1733.20px;top:1285.15px;font-size:14px;line-height:14px;font-weight:400;color:#000716;;letter-spacing:0.22px">eu-west-2</div>
<div class="a" style="left:38.00px;top:1350.00px;width:1992.00px;height:1.00px;background:#e9ebed"></div>
<div class="a" style="left:47.00px;top:1329.50px;width:10.00px;height:2.00px;background:#c0c0c8"></div>
<div class="t" style="left:60.00px;top:1324.15px;font-size:14px;line-height:14px;font-weight:400;color:#0a13d6;text-decoration:underline;text-underline-offset:2px;letter-spacing:0.228px">Public-Subnet-B (subnet-02d85a9dbbc55f22e)</div>
<div class="t" style="left:558.00px;top:1324.15px;font-size:14px;line-height:14px;font-weight:400;color:#000716;;letter-spacing:0.22px">Subnet</div>
<svg class="a" style="left:737.00px;top:1322.50px" width="16" height="16" viewBox="0 0 16 16" fill="none"><circle cx="7" cy="7" r="6" stroke="#0972d3" stroke-width="2"/><path d="M4 7h6M7 4v6M11.3 11.3 15.5 15.5" stroke="#0972d3" stroke-width="2"/></svg>
<div class="t" style="left:762.00px;top:1324.15px;font-size:14px;line-height:14px;font-weight:400;color:#000716;;letter-spacing:0.35px">192.168.11.0/24</div>
<div class="t" style="left:983.00px;top:1324.15px;font-size:14px;line-height:14px;font-weight:400;color:#000716;;letter-spacing:0.22px">-</div>
<div class="t" style="left:1183.00px;top:1324.15px;font-size:14px;line-height:14px;font-weight:400;color:#000716;;letter-spacing:0.22px">-</div>
<div class="t" style="left:1383.40px;top:1324.15px;font-size:14px;line-height:14px;font-weight:400;color:#000716;;letter-spacing:0.35px">736031713230</div>
<div class="t" style="left:1533.00px;top:1324.15px;font-size:14px;line-height:14px;font-weight:400;color:#000716;;letter-spacing:0.35px">1.95%</div>
<div class="t" style="left:1733.20px;top:1324.15px;font-size:14px;line-height:14px;font-weight:400;color:#000716;;letter-spacing:0.22px">eu-west-2</div>
<div class="a" style="left:38.00px;top:1389.00px;width:1992.00px;height:1.00px;background:#e9ebed"></div>
<div class="a" style="left:47.00px;top:1376.50px;width:2.00px;height:67.00px;background:#c0c0c8"></div>
<div class="a" style="left:42.00px;top:1362.50px;width:14.00px;height:14.00px;border:2px solid #2c3440;border-radius:2px;box-sizing:border-box;background:#fff"></div>
<div class="a" style="left:46.00px;top:1368.50px;width:6.00px;height:2.00px;background:#2c3440;border-radius:1px"></div>
<div class="t" style="left:63.00px;top:1363.15px;font-size:14px;line-height:14px;font-weight:400;color:#5a1e96;text-decoration:underline;text-underline-offset:2px;letter-spacing:0.389px">home-pool (ipam-pool-09915377044c4fcbd)</div>
<div class="t" style="left:558.00px;top:1363.15px;font-size:14px;line-height:14px;font-weight:400;color:#000716;;letter-spacing:-0.2px">IPAM pool CIDR</div>
<svg class="a" style="left:737.00px;top:1361.50px" width="16" height="16" viewBox="0 0 16 16" fill="none"><circle cx="7" cy="7" r="6" stroke="#0972d3" stroke-width="2"/><path d="M4 7h6M7 4v6M11.3 11.3 15.5 15.5" stroke="#0972d3" stroke-width="2"/></svg>
<div class="t" style="left:762.00px;top:1363.15px;font-size:14px;line-height:14px;font-weight:400;color:#000716;;letter-spacing:0.35px">192.168.0.0/16</div>
<div class="t" style="left:983.00px;top:1363.15px;font-size:14px;line-height:14px;font-weight:400;color:#000716;;letter-spacing:0.22px">-</div>
<div class="t" style="left:1183.00px;top:1363.15px;font-size:14px;line-height:14px;font-weight:400;color:#000716;;letter-spacing:0.22px">-</div>
<div class="t" style="left:1383.40px;top:1363.15px;font-size:14px;line-height:14px;font-weight:400;color:#000716;;letter-spacing:0.35px">758263608750</div>
<div class="t" style="left:1533.00px;top:1363.15px;font-size:14px;line-height:14px;font-weight:400;color:#000716;;letter-spacing:0.22px">-</div>
<div class="t" style="left:1733.20px;top:1363.15px;font-size:14px;line-height:14px;font-weight:400;color:#000716;;letter-spacing:0.22px">None</div>
<div class="a" style="left:38.00px;top:1428.00px;width:1992.00px;height:1.00px;background:#e9ebed"></div>
<div class="a" style="left:47.00px;top:1402.50px;width:10.00px;height:2.00px;background:#c0c0c8"></div>
<div class="t" style="left:60.00px;top:1392.15px;font-size:14px;line-height:14px;font-weight:400;color:#000716;letter-spacing:0.394px">home-main-vlan (ipam-pool-</div>
<div class="t" style="left:60.00px;top:1412.15px;font-size:14px;line-height:14px;font-weight:400;color:#000716;letter-spacing:0.288px">alloc-09c17ab4768bb4663a5b070eba3b3b9e4)</div>
<div class="t" style="left:558.00px;top:1402.15px;font-size:14px;line-height:14px;font-weight:400;color:#000716;;letter-spacing:0.22px">Custom allocation</div>
<svg class="a" style="left:737.00px;top:1400.50px" width="16" height="16" viewBox="0 0 16 16" fill="none"><circle cx="7" cy="7" r="6" stroke="#0972d3" stroke-width="2"/><path d="M4 7h6M7 4v6M11.3 11.3 15.5 15.5" stroke="#0972d3" stroke-width="2"/></svg>
<div class="t" style="left:762.00px;top:1402.15px;font-size:14px;line-height:14px;font-weight:400;color:#000716;;letter-spacing:0.35px">192.168.1.0/24</div>
<div class="t" style="left:983.00px;top:1402.15px;font-size:14px;line-height:14px;font-weight:400;color:#000716;;letter-spacing:0.22px">-</div>
<div class="t" style="left:1183.00px;top:1402.15px;font-size:14px;line-height:14px;font-weight:400;color:#000716;;letter-spacing:0.22px">-</div>
<div class="t" style="left:1383.40px;top:1402.15px;font-size:14px;line-height:14px;font-weight:400;color:#000716;;letter-spacing:0.35px">758263608750</div>
<div class="t" style="left:1533.00px;top:1402.15px;font-size:14px;line-height:14px;font-weight:400;color:#000716;;letter-spacing:0.22px">-</div>
<div class="t" style="left:1733.20px;top:1402.15px;font-size:14px;line-height:14px;font-weight:400;color:#000716;;letter-spacing:0.22px">None</div>
<div class="a" style="left:47.00px;top:1441.50px;width:10.00px;height:2.00px;background:#c0c0c8"></div>
<div class="t" style="left:60.00px;top:1431.15px;font-size:14px;line-height:14px;font-weight:400;color:#000716;letter-spacing:0.454px">home-iot-vlan (ipam-pool-</div>
<div class="t" style="left:60.00px;top:1451.15px;font-size:14px;line-height:14px;font-weight:400;color:#000716;letter-spacing:0.358px">alloc-0c49e671833a14fbd88cb14c2627b071f)</div>
<div class="t" style="left:558.00px;top:1441.15px;font-size:14px;line-height:14px;font-weight:400;color:#000716;;letter-spacing:0.22px">Custom allocation</div>
<svg class="a" style="left:737.00px;top:1439.50px" width="16" height="16" viewBox="0 0 16 16" fill="none"><circle cx="7" cy="7" r="6" stroke="#0972d3" stroke-width="2"/><path d="M4 7h6M7 4v6M11.3 11.3 15.5 15.5" stroke="#0972d3" stroke-width="2"/></svg>
<div class="t" style="left:762.00px;top:1441.15px;font-size:14px;line-height:14px;font-weight:400;color:#000716;;letter-spacing:0.35px">192.168.2.0/24</div>
<div class="t" style="left:983.00px;top:1441.15px;font-size:14px;line-height:14px;font-weight:400;color:#000716;;letter-spacing:0.22px">-</div>
<div class="t" style="left:1183.00px;top:1441.15px;font-size:14px;line-height:14px;font-weight:400;color:#000716;;letter-spacing:0.22px">-</div>
<div class="t" style="left:1383.40px;top:1441.15px;font-size:14px;line-height:14px;font-weight:400;color:#000716;;letter-spacing:0.35px">758263608750</div>
<div class="t" style="left:1533.00px;top:1441.15px;font-size:14px;line-height:14px;font-weight:400;color:#000716;;letter-spacing:0.22px">-</div>
<div class="t" style="left:1733.20px;top:1441.15px;font-size:14px;line-height:14px;font-weight:400;color:#000716;;letter-spacing:0.22px">None</div>
</body></html>
